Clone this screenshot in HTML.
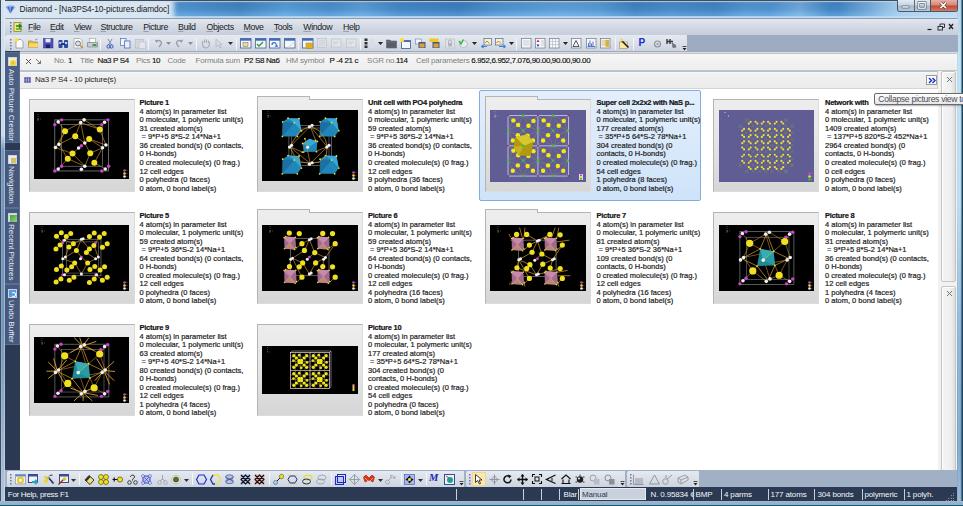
<!DOCTYPE html>
<html><head><meta charset="utf-8"><title>Diamond</title>
<style>
*{margin:0;padding:0;box-sizing:border-box}
html,body{width:963px;height:506px;overflow:hidden}
body{position:relative;background:#a8c4e2;font-family:"Liberation Sans",sans-serif;color:#1e1e1e}
.a{position:absolute}
#frameL{position:absolute;left:0;top:0;width:5px;height:506px;background:linear-gradient(90deg,#3f4d5e 0,#3f4d5e 1px,rgba(255,255,255,.25) 1px,rgba(255,255,255,0) 2px,rgba(255,255,255,0) 4px,rgba(255,255,255,.3) 4px),linear-gradient(180deg,#d4e2ee 0,#c8dbec 135px,#7497bf 150px,#7196be 330px,#9ab4d0 440px,#b0c6dc 506px)}
#frameR{position:absolute;left:957px;top:0;width:6px;height:506px;background:linear-gradient(90deg,rgba(255,255,255,0) 0,rgba(255,255,255,.25) 2px,rgba(255,255,255,0) 4px,#1f4358 5px),linear-gradient(180deg,#a8cce8 0,#b4dcf2 60px,#b0d8f0 200px,#7eaad0 330px,#6c9ac2 450px,#88acd0 506px)}
#frameB{position:absolute;left:0;top:501px;width:963px;height:5px;background:linear-gradient(180deg,#a6b6ca 0,#96b2cc 2px,#88b6d2 3.5px,#1a5870 4px)}
#title{position:absolute;left:0;top:0;width:963px;height:18px;overflow:hidden;background:linear-gradient(180deg,#3e4c5c 0,#3e4c5c 1px,#a8c4dc 1px,#a8c4dc 2px,#5a90c4 2px,#3f7fbc 4px,#4a8cc8 10px,#62a6e0 13px,#70b4ea 16px,#a0cbee 16px,#c8dcef 18px)}
#title .streak{position:absolute;top:2px;height:14px;background:linear-gradient(90deg,#6aaee6 0,#5a9ad4 180px,#3a78b2 240px,#6aaee0 285px,#5090cc 330px,#72aee0 362px,#3f80bf 400px,#3070b0 460px,#5a9ad4 500px,#7ab6e6 560px,#6aa8dc 600px,#3a78b4 635px,#4a8ac8 670px,#3a7ab8 715px,#60a0d8 745px,#5a9ad4 770px,#9cc8ec 800px,#3f80bc 830px,#4a8ac6 870px,#a8cce8 930px,#b8d6ee 963px);left:0;width:963px;opacity:.45}
#title .glow{position:absolute;left:-4px;top:-2px;width:178px;height:24px;background:#dce8f3;filter:blur(2.5px);opacity:.97}
#title .topb{position:absolute;left:0;top:0;width:963px;height:1px;background:#3e4c5c}
#title .t{position:absolute;left:19.5px;top:3.8px;font-size:8.3px;letter-spacing:-0.1px;color:#1a1a1a;white-space:nowrap}
#menu{position:absolute;left:5px;top:18px;width:953px;height:17px;border-radius:2px 2px 0 0;background:linear-gradient(180deg,#8d9cb2 0,#8d9cb2 1px,#e2e7ef 1px,#d4dbe6 8px,#c6cedb 17px)}
#menu span{position:absolute;top:3.6px;font-size:8.8px;letter-spacing:-0.4px;color:#1a1a1a;white-space:nowrap}
#menu u{text-decoration:underline;text-decoration-color:#9aa0aa;text-decoration-thickness:0.6px;text-underline-offset:1.2px}
#tbrow{position:absolute;left:5px;top:35px;width:953px;height:16.5px;background:#9eacc2}
.tb{position:absolute;background:linear-gradient(180deg,#e6eaf1,#cdd4df);border-radius:2px}
.grip{position:absolute;width:2px;height:10px;background:repeating-linear-gradient(180deg,#5a6a80 0,#5a6a80 1px,transparent 1px,transparent 2.5px)}
.sep{position:absolute;width:1px;height:12px;background:#9aa6b8;border-right:1px solid #f4f6f9}
#side{position:absolute;left:5px;top:51px;width:15px;height:419px;background:#2b3a52}
#info{position:absolute;left:20px;top:51.6px;width:937px;height:19.9px;background:linear-gradient(180deg,#d8dce2 0,#d8dce2 1px,#c4c4c4 1px,#c4c4c4 2px,#f6f6f6 2px,#eeeeee 100%);border-bottom:1px solid #c4c4c4}
#info span{position:absolute;top:4.2px;font-size:8px;white-space:nowrap}
#info .l{color:#7e7e7e;letter-spacing:-0.2px}
#info .v{color:#111;letter-spacing:-0.35px;-webkit-text-stroke:0.15px #111}
#hdr{position:absolute;left:20px;top:71.5px;width:918px;height:17px;background:linear-gradient(180deg,#fafafa 0,#f0f0f0 2px,#ececec 100%);border-bottom:1px solid #d4d4d4;border-right:1px solid #cfcfcf}
#hdr .t{position:absolute;left:15px;top:3px;font-size:8px;letter-spacing:-0.2px;color:#1e1e1e;white-space:nowrap}
#rpanel{position:absolute;left:938px;top:71px;width:19px;height:399px;background:#f2f2f2}
.rbox{position:absolute;left:3px;width:15px;background:linear-gradient(90deg,#f4f4f4 0,#efefef 9px,#d8d8d8 14px);border:1px solid #c4c4c4;border-radius:2px;box-shadow:inset 1px 1px 0 #fff}
#content{position:absolute;left:20px;top:89px;width:918px;height:381px;background:#fff}
#btrow{position:absolute;left:5px;top:470px;width:952px;height:17px;background:#a2b0c5}
#status{position:absolute;left:5px;top:487px;width:952px;height:14px;background:#2b3a52}
#status span{position:absolute;top:3.2px;font-size:8px;letter-spacing:-0.15px;color:#f2f5f8;white-space:nowrap}
#status .d{position:absolute;top:2px;width:1px;height:11px;background:#c8d0da}
.fr{position:absolute;width:106px;height:92.3px;border:1px solid #b4b4b4;border-right-color:#dcdcdc;border-bottom-color:#dcdcdc;background:linear-gradient(180deg,#ededed 0,#e6e6e6 40%,#d6d6d6 100%)}
.tabbed{border-top-color:#b4b4b4}
.tab{position:absolute;left:-1px;top:-4px;width:53px;height:4px;border:1px solid #b4b4b4;border-bottom:none;background:#ededed}
.sel{position:absolute;background:linear-gradient(180deg,#e3effc,#cfe3f9);border:1px solid #84acdd;border-radius:2px}
.ct{position:absolute;font-size:7.5px;line-height:8.52px;color:#1c1c1c;white-space:nowrap;-webkit-text-stroke:0.2px #1c1c1c}
.ct b{color:#111;letter-spacing:-0.25px}
#tip{position:absolute;left:874px;top:92.5px;width:95px;height:12.5px;background:linear-gradient(180deg,#ffffff,#e4e6ec);border:1px solid #6a6a6a;border-radius:2px;box-shadow:1px 1px 1.5px rgba(0,0,0,.3)}
#tip span{position:absolute;left:3.3px;top:0.6px;font-size:8.6px;letter-spacing:-0.3px;color:#4e4e4e;white-space:nowrap}
.stab{position:absolute;left:0;width:14.5px;background:#46597c;border:1px solid #5a6e92;border-left:none}
.stab span{position:absolute;left:2px;writing-mode:vertical-rl;font-size:8px;color:#e4eaf2;white-space:nowrap}
.sicon{position:absolute;left:2.5px;top:4px;width:9px;height:9px;border:1px solid #c8d4e4}

</style></head><body>
<div id="title"><div class="streak"></div><div class="glow"></div><div style="position:absolute;left:840px;top:1px;width:123px;height:17px;background:linear-gradient(90deg,rgba(190,222,245,0) 0,rgba(190,222,245,.75) 60px,rgba(200,228,248,.85) 123px)"></div><div class="topb"></div><span class="t">Diamond - [Na3PS4-10-pictures.diamdoc]</span></div>
<div id="frameL"></div>
<div id="frameR"></div>
<div id="frameB"></div>
<div id="menu">
<span style="left:23px"><u>F</u>ile</span>
<span style="left:45px"><u>E</u>dit</span>
<span style="left:69px"><u>V</u>iew</span>
<span style="left:95.5px"><u>S</u>tructure</span>
<span style="left:138.3px"><u>P</u>icture</span>
<span style="left:173px"><u>B</u>uild</span>
<span style="left:201.6px"><u>O</u>bjects</span>
<span style="left:238.6px"><u>M</u>ove</span>
<span style="left:268.7px"><u>T</u>ools</span>
<span style="left:298.3px"><u>W</u>indow</span>
<span style="left:338px"><u>H</u>elp</span>
</div>
<div id="tbrow"><div class="tb" style="left:0;top:0;width:682px;height:16px"></div></div>
<div id="side">
<div class="stab" style="top:1px;height:90.5px;background:#4b5f84"><div class="sicon" style="background:#f4f0c8"><div style="position:absolute;left:1.5px;top:1.5px;width:6px;height:6px;border-radius:50%;background:#e8c020;box-shadow:inset 0 0 0 1.5px #f0d860"></div></div><span style="top:16px">Auto Picture Creator</span></div>
<div class="stab" style="top:99px;height:58px"><div class="sicon" style="background:#e8ecf0"><div style="position:absolute;left:2px;top:2px;width:5px;height:5px;background:#d8c060"></div></div><span style="top:15px">Navigation</span></div>
<div class="stab" style="top:157px;height:76px"><div class="sicon" style="background:#d8e4d0"><div style="position:absolute;left:1px;top:1px;width:7px;height:7px;background:linear-gradient(135deg,#40a040,#a0d080)"></div></div><span style="top:15px">Recent Pictures</span></div>
<div class="stab" style="top:233px;height:61px"><div class="sicon" style="background:#5a9ae0"><div style="position:absolute;left:2px;top:2px;width:5px;height:5px;border:1.3px solid #fff;border-radius:50%;border-left-color:transparent"></div></div><span style="top:15px">Undo Buffer</span></div>
</div>
<div id="info">
<span class="l" style="left:34px">No.</span><span class="v" style="left:48px">1</span>
<span class="l" style="left:60px">Title</span><span class="v" style="left:77.5px">Na3 P S4</span>
<span class="l" style="left:116px">Pics</span><span class="v" style="left:132px">10</span>
<span class="l" style="left:147.5px">Code</span>
<span class="l" style="left:175.5px">Formula sum</span><span class="v" style="left:224px">P2 S8 Na6</span>
<span class="l" style="left:266px">HM symbol</span><span class="v" style="left:309.5px">P -4 21 c</span>
<span class="l" style="left:347px">SGR no.</span><span class="v" style="left:376px">114</span>
<span class="l" style="left:396px">Cell parameters</span><span class="v" style="left:451.3px">6.952,6.952,7.076,90.00,90.00,90.00</span>
</div>
<div id="hdr"><span class="t">Na3 P S4 - 10 picture(s)</span></div>
<div id="rpanel"><div class="rbox" style="top:0;height:211px"></div><div class="rbox" style="top:214.5px;height:185px"></div></div>
<div id="content"></div>
<div class="fr" style="left:29px;top:99px;height:93px"></div>
<svg class="a" style="left:34px;top:112px" width="95" height="67" viewBox="0 0 95 67"><rect width="95" height="67" fill="#000"/><line x1="4" y1="2" x2="4" y2="10" stroke="#a0a0a0" stroke-width="0.4" stroke-dasharray="1 1"/><line x1="4" y1="7" x2="8" y2="7" stroke="#a0a0a0" stroke-width="0.4" stroke-dasharray="1 1"/><circle cx="4" cy="7" r="0.6" fill="#a0a0a0"/><rect x="20.81" y="7.86" width="53.83" height="51.11" fill="none" stroke="#909090" stroke-width="0.7"/><rect x="27.62" y="12.63" width="40.89" height="41.57" fill="none" stroke="#909090" stroke-width="0.6"/><line x1="31.03" y1="19.17" x2="46.7" y2="10.59" stroke="#c08a2a" stroke-width="0.7"/><line x1="46.7" y1="10.59" x2="41.25" y2="24.21" stroke="#c08a2a" stroke-width="0.7"/><line x1="46.7" y1="10.59" x2="50.79" y2="31.03" stroke="#c08a2a" stroke-width="0.7"/><line x1="50.11" y1="7.86" x2="65.78" y2="17.4" stroke="#c08a2a" stroke-width="0.7"/><line x1="65.78" y1="17.4" x2="71.92" y2="33.07" stroke="#c08a2a" stroke-width="0.7"/><line x1="31.03" y1="19.17" x2="24.9" y2="32.39" stroke="#c08a2a" stroke-width="0.7"/><line x1="24.9" y1="32.39" x2="41.25" y2="24.21" stroke="#c08a2a" stroke-width="0.7"/><line x1="41.25" y1="24.21" x2="50.79" y2="31.03" stroke="#c08a2a" stroke-width="0.7"/><line x1="55.15" y1="26.94" x2="71.92" y2="33.07" stroke="#c08a2a" stroke-width="0.7"/><line x1="24.9" y1="32.39" x2="33.76" y2="46.7" stroke="#c08a2a" stroke-width="0.7"/><line x1="21.49" y1="35.53" x2="38.53" y2="41.52" stroke="#c08a2a" stroke-width="0.7"/><line x1="38.53" y1="41.52" x2="50.79" y2="54.2" stroke="#c08a2a" stroke-width="0.7"/><line x1="33.76" y1="46.7" x2="24.21" y2="56.93" stroke="#c08a2a" stroke-width="0.7"/><line x1="56.24" y1="41.25" x2="68.51" y2="35.8" stroke="#c08a2a" stroke-width="0.7"/><line x1="56.24" y1="41.25" x2="50.79" y2="54.2" stroke="#c08a2a" stroke-width="0.7"/><line x1="60.33" y1="50.79" x2="71.24" y2="56.93" stroke="#c08a2a" stroke-width="0.7"/><line x1="68.51" y1="35.8" x2="60.33" y2="50.79" stroke="#c08a2a" stroke-width="0.7"/><line x1="44.66" y1="36.07" x2="38.53" y2="41.52" stroke="#c08a2a" stroke-width="0.7"/><line x1="50.79" y1="31.03" x2="56.24" y2="41.25" stroke="#c08a2a" stroke-width="0.7"/><line x1="50.79" y1="54.2" x2="33.76" y2="46.7" stroke="#c08a2a" stroke-width="0.7"/><line x1="55.15" y1="26.94" x2="68.51" y2="35.8" stroke="#c08a2a" stroke-width="0.7"/><line x1="24.21" y1="9.9" x2="31.03" y2="19.17" stroke="#c08a2a" stroke-width="0.7"/><line x1="31.03" y1="19.17" x2="21.49" y2="35.53" stroke="#c08a2a" stroke-width="0.7"/><line x1="55.15" y1="26.94" x2="50.79" y2="31.03" stroke="#c08a2a" stroke-width="0.7"/><line x1="46.7" y1="10.59" x2="65.78" y2="17.4" stroke="#c08a2a" stroke-width="0.7"/><circle cx="27.62" cy="7.86" r="1.7" fill="#d040d0"/><circle cx="20.81" cy="12.63" r="1.7" fill="#d040d0"/><circle cx="73.96" cy="7.86" r="1.7" fill="#d040d0"/><circle cx="67.83" cy="12.63" r="1.7" fill="#d040d0"/><circle cx="47.38" cy="33.76" r="1.7" fill="#d040d0"/><circle cx="20.81" cy="58.97" r="1.7" fill="#d040d0"/><circle cx="27.62" cy="54.2" r="1.7" fill="#d040d0"/><circle cx="67.83" cy="58.97" r="1.7" fill="#d040d0"/><circle cx="74.64" cy="54.2" r="1.7" fill="#d040d0"/><circle cx="24.21" cy="9.9" r="1.8" fill="#f0f0f0"/><circle cx="50.11" cy="7.86" r="1.8" fill="#f0f0f0"/><circle cx="46.7" cy="10.59" r="1.8" fill="#f0f0f0"/><circle cx="70.56" cy="10.18" r="1.8" fill="#f0f0f0"/><circle cx="21.49" cy="35.53" r="1.8" fill="#f0f0f0"/><circle cx="24.9" cy="32.39" r="1.8" fill="#f0f0f0"/><circle cx="44.66" cy="36.07" r="1.8" fill="#f0f0f0"/><circle cx="50.79" cy="31.03" r="1.8" fill="#f0f0f0"/><circle cx="68.51" cy="35.8" r="1.8" fill="#f0f0f0"/><circle cx="71.92" cy="33.07" r="1.8" fill="#f0f0f0"/><circle cx="24.21" cy="56.93" r="1.8" fill="#f0f0f0"/><circle cx="47.38" cy="57.33" r="1.8" fill="#f0f0f0"/><circle cx="50.79" cy="54.2" r="1.8" fill="#f0f0f0"/><circle cx="71.24" cy="56.93" r="1.8" fill="#f0f0f0"/><circle cx="31.03" cy="19.17" r="3.0" fill="#f0e020"/><circle cx="41.25" cy="24.21" r="3.0" fill="#f0e020"/><circle cx="55.15" cy="26.94" r="3.0" fill="#f0e020"/><circle cx="65.78" cy="17.4" r="3.0" fill="#f0e020"/><circle cx="38.53" cy="41.52" r="3.0" fill="#f0e020"/><circle cx="33.76" cy="46.7" r="3.0" fill="#f0e020"/><circle cx="56.24" cy="41.25" r="3.0" fill="#f0e020"/><circle cx="60.33" cy="50.79" r="3.0" fill="#f0e020"/><circle cx="90.5" cy="58.5" r="1.3" fill="#d040d0"/><line x1="92" y1="58.5" x2="93.5" y2="58.5" stroke="#888" stroke-width="0.4"/><circle cx="90.5" cy="61.5" r="1.3" fill="#f0e020"/><line x1="92" y1="61.5" x2="93.5" y2="61.5" stroke="#888" stroke-width="0.4"/><circle cx="90.5" cy="64.5" r="1.3" fill="#f0f0f0"/><line x1="92" y1="64.5" x2="93.5" y2="64.5" stroke="#888" stroke-width="0.4"/></svg>
<div class="ct" style="left:139.5px;top:99.4px"><b>Picture 1</b><br>4 atom(s) in parameter list<br>0 molecular, 1 polymeric unit(s)<br>31 created atom(s)<br>&nbsp;= 9*P+5 8*S-2 14*Na+1<br>36 created bond(s) (0 contacts,<br>0 H-bonds)<br>0 created molecule(s) (0 frag.)<br>12 cell edges<br>0 polyhedra (0 faces)<br>0 atom, 0 bond label(s)</div>
<div class="fr tabbed" style="left:257px;top:99px;height:93px"><div class="tab"></div></div>
<svg class="a" style="left:262px;top:110px" width="96" height="71" viewBox="0 0 96 71"><rect width="96" height="71" fill="#000"/><line x1="6" y1="1" x2="6" y2="9" stroke="#a0a0a0" stroke-width="0.4" stroke-dasharray="1 1"/><line x1="6" y1="6" x2="10" y2="6" stroke="#a0a0a0" stroke-width="0.4" stroke-dasharray="1 1"/><circle cx="6" cy="6" r="0.6" fill="#a0a0a0"/><rect x="26.93" y="15.36" width="42.72" height="40.05" fill="none" stroke="#909090" stroke-width="0.6"/><rect x="29.6" y="18.03" width="37.38" height="34.71" fill="none" stroke="#909090" stroke-width="0.5"/><polygon points="20.7,11.8 26.04,8.24 37.08,8.6 39.39,20.7 35.3,26.4 20.34,26.4" fill="#1f88b8" fill-opacity="1"/><polygon points="26.04,8.24 37.08,8.6 39.39,20.7 32.27,12.69" fill="#38a8d8" fill-opacity="1"/><polygon points="20.7,11.8 32.27,12.69 20.34,26.4" fill="#1a70a0" fill-opacity="1"/><line x1="20.7" y1="11.8" x2="35.3" y2="26.4" stroke="#4060d0" stroke-width="0.5"/><circle cx="20.7" cy="11.8" r="0.9" fill="#f0e020"/><circle cx="26.04" cy="8.24" r="0.9" fill="#f0e020"/><circle cx="37.08" cy="8.6" r="0.9" fill="#f0e020"/><circle cx="39.39" cy="20.7" r="0.9" fill="#f0e020"/><circle cx="35.3" cy="26.4" r="0.9" fill="#f0e020"/><circle cx="20.34" cy="26.4" r="0.9" fill="#f0e020"/><circle cx="32.27" cy="12.69" r="0.9" fill="#f0e020"/><polygon points="58.08,11.8 63.42,8.24 74.46,8.6 76.77,20.7 72.68,26.4 57.72,26.4" fill="#1f88b8" fill-opacity="1"/><polygon points="63.42,8.24 74.46,8.6 76.77,20.7 69.65,12.69" fill="#38a8d8" fill-opacity="1"/><polygon points="58.08,11.8 69.65,12.69 57.72,26.4" fill="#1a70a0" fill-opacity="1"/><line x1="58.08" y1="11.8" x2="72.68" y2="26.4" stroke="#4060d0" stroke-width="0.5"/><circle cx="58.08" cy="11.8" r="0.9" fill="#f0e020"/><circle cx="63.42" cy="8.24" r="0.9" fill="#f0e020"/><circle cx="74.46" cy="8.6" r="0.9" fill="#f0e020"/><circle cx="76.77" cy="20.7" r="0.9" fill="#f0e020"/><circle cx="72.68" cy="26.4" r="0.9" fill="#f0e020"/><circle cx="57.72" cy="26.4" r="0.9" fill="#f0e020"/><circle cx="69.65" cy="12.69" r="0.9" fill="#f0e020"/><polygon points="20.7,49.18 26.04,45.62 37.08,45.98 39.39,58.08 35.3,63.78 20.34,63.78" fill="#1f88b8" fill-opacity="1"/><polygon points="26.04,45.62 37.08,45.98 39.39,58.08 32.27,50.07" fill="#38a8d8" fill-opacity="1"/><polygon points="20.7,49.18 32.27,50.07 20.34,63.78" fill="#1a70a0" fill-opacity="1"/><line x1="20.7" y1="49.18" x2="35.3" y2="63.78" stroke="#4060d0" stroke-width="0.5"/><circle cx="20.7" cy="49.18" r="0.9" fill="#f0e020"/><circle cx="26.04" cy="45.62" r="0.9" fill="#f0e020"/><circle cx="37.08" cy="45.98" r="0.9" fill="#f0e020"/><circle cx="39.39" cy="58.08" r="0.9" fill="#f0e020"/><circle cx="35.3" cy="63.78" r="0.9" fill="#f0e020"/><circle cx="20.34" cy="63.78" r="0.9" fill="#f0e020"/><circle cx="32.27" cy="50.07" r="0.9" fill="#f0e020"/><polygon points="58.08,49.18 63.42,45.62 74.46,45.98 76.77,58.08 72.68,63.78 57.72,63.78" fill="#1f88b8" fill-opacity="1"/><polygon points="63.42,45.62 74.46,45.98 76.77,58.08 69.65,50.07" fill="#38a8d8" fill-opacity="1"/><polygon points="58.08,49.18 69.65,50.07 57.72,63.78" fill="#1a70a0" fill-opacity="1"/><line x1="58.08" y1="49.18" x2="72.68" y2="63.78" stroke="#4060d0" stroke-width="0.5"/><circle cx="58.08" cy="49.18" r="0.9" fill="#f0e020"/><circle cx="63.42" cy="45.62" r="0.9" fill="#f0e020"/><circle cx="74.46" cy="45.98" r="0.9" fill="#f0e020"/><circle cx="76.77" cy="58.08" r="0.9" fill="#f0e020"/><circle cx="72.68" cy="63.78" r="0.9" fill="#f0e020"/><circle cx="57.72" cy="63.78" r="0.9" fill="#f0e020"/><circle cx="69.65" cy="50.07" r="0.9" fill="#f0e020"/><polygon points="40.64,33.52 47.4,28.71 55.41,31.38 54.52,41.7 41.7,42.06" fill="#1f88b8" fill-opacity="1"/><polygon points="40.64,33.52 47.4,28.71 55.41,31.38 47.4,36.72" fill="#38a8d8" fill-opacity="1"/><line x1="48.29" y1="16.25" x2="38.5" y2="20.7" stroke="#c08a2a" stroke-width="0.8"/><line x1="38.5" y1="20.7" x2="31.38" y2="30.49" stroke="#c08a2a" stroke-width="0.8"/><line x1="31.38" y1="30.49" x2="27.82" y2="36.72" stroke="#c08a2a" stroke-width="0.8"/><line x1="27.82" y1="36.72" x2="32.27" y2="45.62" stroke="#c08a2a" stroke-width="0.8"/><line x1="32.27" y1="45.62" x2="39.39" y2="51.85" stroke="#c08a2a" stroke-width="0.8"/><line x1="39.39" y1="51.85" x2="48.29" y2="53.63" stroke="#c08a2a" stroke-width="0.8"/><line x1="48.29" y1="53.63" x2="57.19" y2="51.85" stroke="#c08a2a" stroke-width="0.8"/><line x1="57.19" y1="51.85" x2="64.31" y2="45.62" stroke="#c08a2a" stroke-width="0.8"/><line x1="64.31" y1="45.62" x2="65.2" y2="36.72" stroke="#c08a2a" stroke-width="0.8"/><line x1="65.2" y1="36.72" x2="63.42" y2="29.6" stroke="#c08a2a" stroke-width="0.8"/><line x1="63.42" y1="29.6" x2="57.19" y2="20.7" stroke="#c08a2a" stroke-width="0.8"/><line x1="57.19" y1="20.7" x2="48.29" y2="16.25" stroke="#c08a2a" stroke-width="0.8"/><line x1="48.29" y1="16.25" x2="27.82" y2="36.72" stroke="#c08a2a" stroke-width="0.7"/><line x1="27.82" y1="36.72" x2="48.29" y2="53.63" stroke="#c08a2a" stroke-width="0.7"/><line x1="48.29" y1="53.63" x2="65.2" y2="36.72" stroke="#c08a2a" stroke-width="0.7"/><line x1="65.2" y1="36.72" x2="48.29" y2="16.25" stroke="#c08a2a" stroke-width="0.7"/><line x1="48.29" y1="16.25" x2="53.63" y2="30.49" stroke="#c08a2a" stroke-width="0.7"/><line x1="27.82" y1="36.72" x2="40.28" y2="42.06" stroke="#c08a2a" stroke-width="0.7"/><line x1="65.2" y1="36.72" x2="54.52" y2="41.17" stroke="#c08a2a" stroke-width="0.7"/><line x1="48.29" y1="53.63" x2="42.95" y2="28.71" stroke="#c08a2a" stroke-width="0.7"/><circle cx="40.64" cy="33.52" r="0.9" fill="#f0e020"/><circle cx="55.41" cy="31.38" r="0.9" fill="#f0e020"/><circle cx="54.52" cy="41.7" r="0.9" fill="#f0e020"/><circle cx="41.7" cy="42.06" r="0.9" fill="#f0e020"/><circle cx="39.39" cy="20.7" r="0.9" fill="#f0e020"/><circle cx="53.63" cy="30.49" r="0.9" fill="#f0e020"/><circle cx="42.95" cy="28.71" r="0.9" fill="#f0e020"/><circle cx="40.28" cy="42.06" r="0.9" fill="#f0e020"/><circle cx="47.4" cy="16.78" r="1.6" fill="#f0f0f0"/><circle cx="50.07" cy="15.36" r="1.6" fill="#f0f0f0"/><circle cx="27.46" cy="37.08" r="1.6" fill="#f0f0f0"/><circle cx="29.6" cy="35.3" r="1.6" fill="#f0f0f0"/><circle cx="64.84" cy="37.08" r="1.6" fill="#f0f0f0"/><circle cx="66.98" cy="35.3" r="1.6" fill="#f0f0f0"/><circle cx="47.4" cy="54.16" r="1.6" fill="#f0f0f0"/><circle cx="50.07" cy="52.74" r="1.6" fill="#f0f0f0"/><circle cx="45.62" cy="37.25" r="1.6" fill="#f0f0f0"/><circle cx="91.5" cy="62.5" r="1.3" fill="#d040d0"/><line x1="93" y1="62.5" x2="94.5" y2="62.5" stroke="#888" stroke-width="0.4"/><circle cx="91.5" cy="65.5" r="1.3" fill="#f0e020"/><line x1="93" y1="65.5" x2="94.5" y2="65.5" stroke="#888" stroke-width="0.4"/><circle cx="91.5" cy="68.5" r="1.3" fill="#f0f0f0"/><line x1="93" y1="68.5" x2="94.5" y2="68.5" stroke="#888" stroke-width="0.4"/></svg>
<div class="ct" style="left:368px;top:99.4px"><b>Unit cell with PO4 polyhedra</b><br>4 atom(s) in parameter list<br>0 molecular, 1 polymeric unit(s)<br>59 created atom(s)<br>&nbsp;= 9*P+5 36*S-2 14*Na+1<br>36 created bond(s) (0 contacts,<br>0 H-bonds)<br>0 created molecule(s) (0 frag.)<br>12 cell edges<br>9 polyhedra (36 faces)<br>0 atom, 0 bond label(s)</div>
<div class="sel" style="left:479px;top:90px;width:222px;height:111px"></div>
<div class="fr tabbed" style="left:485px;top:99px;height:93px"><div class="tab"></div></div>
<svg class="a" style="left:490px;top:110px" width="96" height="72" viewBox="0 0 96 72"><rect width="96" height="72" fill="#5f5d93"/><line x1="5" y1="1" x2="5" y2="9" stroke="#d0d0e8" stroke-width="0.4" stroke-dasharray="1 1"/><line x1="5" y1="6" x2="9" y2="6" stroke="#d0d0e8" stroke-width="0.4" stroke-dasharray="1 1"/><circle cx="5" cy="6" r="0.6" fill="#d0d0e8"/><line x1="33.16" y1="5.57" x2="23.37" y2="10.38" stroke="#a88a68" stroke-width="0.4"/><line x1="33.16" y1="5.57" x2="28.18" y2="15.0" stroke="#a88a68" stroke-width="0.4"/><line x1="33.16" y1="5.57" x2="38.5" y2="15.72" stroke="#a88a68" stroke-width="0.4"/><line x1="33.16" y1="5.57" x2="43.48" y2="10.91" stroke="#a88a68" stroke-width="0.4"/><line x1="63.06" y1="5.57" x2="53.63" y2="10.38" stroke="#a88a68" stroke-width="0.4"/><line x1="63.06" y1="5.57" x2="58.44" y2="15.0" stroke="#a88a68" stroke-width="0.4"/><line x1="63.06" y1="5.57" x2="68.76" y2="15.72" stroke="#a88a68" stroke-width="0.4"/><line x1="63.06" y1="5.57" x2="73.74" y2="10.91" stroke="#a88a68" stroke-width="0.4"/><line x1="18.03" y1="20.7" x2="23.37" y2="10.38" stroke="#a88a68" stroke-width="0.4"/><line x1="18.03" y1="20.7" x2="28.18" y2="15.0" stroke="#a88a68" stroke-width="0.4"/><line x1="18.03" y1="20.7" x2="22.84" y2="30.49" stroke="#a88a68" stroke-width="0.4"/><line x1="18.03" y1="20.7" x2="27.82" y2="25.15" stroke="#a88a68" stroke-width="0.4"/><line x1="33.16" y1="20.7" x2="23.37" y2="10.38" stroke="#a88a68" stroke-width="0.4"/><line x1="33.16" y1="20.7" x2="28.18" y2="15.0" stroke="#a88a68" stroke-width="0.4"/><line x1="33.16" y1="20.7" x2="38.5" y2="15.72" stroke="#a88a68" stroke-width="0.4"/><line x1="33.16" y1="20.7" x2="43.48" y2="10.91" stroke="#a88a68" stroke-width="0.4"/><line x1="33.16" y1="20.7" x2="22.84" y2="30.49" stroke="#a88a68" stroke-width="0.4"/><line x1="33.16" y1="20.7" x2="27.82" y2="25.15" stroke="#a88a68" stroke-width="0.4"/><line x1="33.16" y1="20.7" x2="37.61" y2="25.68" stroke="#a88a68" stroke-width="0.4"/><line x1="33.16" y1="20.7" x2="42.95" y2="30.49" stroke="#a88a68" stroke-width="0.4"/><line x1="47.93" y1="20.7" x2="38.5" y2="15.72" stroke="#a88a68" stroke-width="0.4"/><line x1="47.93" y1="20.7" x2="43.48" y2="10.91" stroke="#a88a68" stroke-width="0.4"/><line x1="47.93" y1="20.7" x2="37.61" y2="25.68" stroke="#a88a68" stroke-width="0.4"/><line x1="47.93" y1="20.7" x2="42.95" y2="30.49" stroke="#a88a68" stroke-width="0.4"/><line x1="47.93" y1="20.7" x2="53.63" y2="10.38" stroke="#a88a68" stroke-width="0.4"/><line x1="47.93" y1="20.7" x2="58.44" y2="15.0" stroke="#a88a68" stroke-width="0.4"/><line x1="47.93" y1="20.7" x2="53.1" y2="30.49" stroke="#a88a68" stroke-width="0.4"/><line x1="47.93" y1="20.7" x2="58.08" y2="25.15" stroke="#a88a68" stroke-width="0.4"/><line x1="63.06" y1="20.7" x2="53.63" y2="10.38" stroke="#a88a68" stroke-width="0.4"/><line x1="63.06" y1="20.7" x2="58.44" y2="15.0" stroke="#a88a68" stroke-width="0.4"/><line x1="63.06" y1="20.7" x2="68.76" y2="15.72" stroke="#a88a68" stroke-width="0.4"/><line x1="63.06" y1="20.7" x2="53.1" y2="30.49" stroke="#a88a68" stroke-width="0.4"/><line x1="63.06" y1="20.7" x2="58.08" y2="25.15" stroke="#a88a68" stroke-width="0.4"/><line x1="63.06" y1="20.7" x2="67.87" y2="25.68" stroke="#a88a68" stroke-width="0.4"/><line x1="63.06" y1="20.7" x2="73.21" y2="30.49" stroke="#a88a68" stroke-width="0.4"/><line x1="77.66" y1="20.7" x2="68.76" y2="15.72" stroke="#a88a68" stroke-width="0.4"/><line x1="77.66" y1="20.7" x2="73.74" y2="10.91" stroke="#a88a68" stroke-width="0.4"/><line x1="77.66" y1="20.7" x2="67.87" y2="25.68" stroke="#a88a68" stroke-width="0.4"/><line x1="77.66" y1="20.7" x2="73.21" y2="30.49" stroke="#a88a68" stroke-width="0.4"/><line x1="33.16" y1="35.83" x2="22.84" y2="30.49" stroke="#a88a68" stroke-width="0.4"/><line x1="33.16" y1="35.83" x2="27.82" y2="25.15" stroke="#a88a68" stroke-width="0.4"/><line x1="33.16" y1="35.83" x2="37.61" y2="25.68" stroke="#a88a68" stroke-width="0.4"/><line x1="33.16" y1="35.83" x2="42.95" y2="30.49" stroke="#a88a68" stroke-width="0.4"/><line x1="33.16" y1="35.83" x2="23.37" y2="40.64" stroke="#a88a68" stroke-width="0.4"/><line x1="33.16" y1="35.83" x2="28.18" y2="45.26" stroke="#a88a68" stroke-width="0.4"/><line x1="33.16" y1="35.83" x2="38.5" y2="45.98" stroke="#a88a68" stroke-width="0.4"/><line x1="33.16" y1="35.83" x2="43.48" y2="41.17" stroke="#a88a68" stroke-width="0.4"/><line x1="63.06" y1="35.83" x2="53.1" y2="30.49" stroke="#a88a68" stroke-width="0.4"/><line x1="63.06" y1="35.83" x2="58.08" y2="25.15" stroke="#a88a68" stroke-width="0.4"/><line x1="63.06" y1="35.83" x2="67.87" y2="25.68" stroke="#a88a68" stroke-width="0.4"/><line x1="63.06" y1="35.83" x2="73.21" y2="30.49" stroke="#a88a68" stroke-width="0.4"/><line x1="63.06" y1="35.83" x2="53.63" y2="40.64" stroke="#a88a68" stroke-width="0.4"/><line x1="63.06" y1="35.83" x2="58.44" y2="45.26" stroke="#a88a68" stroke-width="0.4"/><line x1="63.06" y1="35.83" x2="68.76" y2="45.98" stroke="#a88a68" stroke-width="0.4"/><line x1="63.06" y1="35.83" x2="73.74" y2="41.17" stroke="#a88a68" stroke-width="0.4"/><line x1="18.03" y1="50.6" x2="23.37" y2="40.64" stroke="#a88a68" stroke-width="0.4"/><line x1="18.03" y1="50.6" x2="28.18" y2="45.26" stroke="#a88a68" stroke-width="0.4"/><line x1="18.03" y1="50.6" x2="22.84" y2="60.75" stroke="#a88a68" stroke-width="0.4"/><line x1="18.03" y1="50.6" x2="27.82" y2="55.41" stroke="#a88a68" stroke-width="0.4"/><line x1="33.16" y1="50.6" x2="23.37" y2="40.64" stroke="#a88a68" stroke-width="0.4"/><line x1="33.16" y1="50.6" x2="28.18" y2="45.26" stroke="#a88a68" stroke-width="0.4"/><line x1="33.16" y1="50.6" x2="38.5" y2="45.98" stroke="#a88a68" stroke-width="0.4"/><line x1="33.16" y1="50.6" x2="43.48" y2="41.17" stroke="#a88a68" stroke-width="0.4"/><line x1="33.16" y1="50.6" x2="27.82" y2="55.41" stroke="#a88a68" stroke-width="0.4"/><line x1="33.16" y1="50.6" x2="37.61" y2="55.94" stroke="#a88a68" stroke-width="0.4"/><line x1="33.16" y1="50.6" x2="42.95" y2="60.75" stroke="#a88a68" stroke-width="0.4"/><line x1="47.93" y1="50.6" x2="38.5" y2="45.98" stroke="#a88a68" stroke-width="0.4"/><line x1="47.93" y1="50.6" x2="43.48" y2="41.17" stroke="#a88a68" stroke-width="0.4"/><line x1="47.93" y1="50.6" x2="37.61" y2="55.94" stroke="#a88a68" stroke-width="0.4"/><line x1="47.93" y1="50.6" x2="42.95" y2="60.75" stroke="#a88a68" stroke-width="0.4"/><line x1="47.93" y1="50.6" x2="53.63" y2="40.64" stroke="#a88a68" stroke-width="0.4"/><line x1="47.93" y1="50.6" x2="58.44" y2="45.26" stroke="#a88a68" stroke-width="0.4"/><line x1="47.93" y1="50.6" x2="53.1" y2="60.75" stroke="#a88a68" stroke-width="0.4"/><line x1="47.93" y1="50.6" x2="58.08" y2="55.41" stroke="#a88a68" stroke-width="0.4"/><line x1="63.06" y1="50.6" x2="53.63" y2="40.64" stroke="#a88a68" stroke-width="0.4"/><line x1="63.06" y1="50.6" x2="58.44" y2="45.26" stroke="#a88a68" stroke-width="0.4"/><line x1="63.06" y1="50.6" x2="68.76" y2="45.98" stroke="#a88a68" stroke-width="0.4"/><line x1="63.06" y1="50.6" x2="53.1" y2="60.75" stroke="#a88a68" stroke-width="0.4"/><line x1="63.06" y1="50.6" x2="58.08" y2="55.41" stroke="#a88a68" stroke-width="0.4"/><line x1="63.06" y1="50.6" x2="67.87" y2="55.94" stroke="#a88a68" stroke-width="0.4"/><line x1="77.66" y1="50.6" x2="68.76" y2="45.98" stroke="#a88a68" stroke-width="0.4"/><line x1="77.66" y1="50.6" x2="73.74" y2="41.17" stroke="#a88a68" stroke-width="0.4"/><line x1="77.66" y1="50.6" x2="67.87" y2="55.94" stroke="#a88a68" stroke-width="0.4"/><line x1="77.66" y1="50.6" x2="73.21" y2="60.75" stroke="#a88a68" stroke-width="0.4"/><line x1="33.16" y1="66.09" x2="22.84" y2="60.75" stroke="#a88a68" stroke-width="0.4"/><line x1="33.16" y1="66.09" x2="27.82" y2="55.41" stroke="#a88a68" stroke-width="0.4"/><line x1="33.16" y1="66.09" x2="37.61" y2="55.94" stroke="#a88a68" stroke-width="0.4"/><line x1="33.16" y1="66.09" x2="42.95" y2="60.75" stroke="#a88a68" stroke-width="0.4"/><line x1="63.06" y1="66.09" x2="53.1" y2="60.75" stroke="#a88a68" stroke-width="0.4"/><line x1="63.06" y1="66.09" x2="58.08" y2="55.41" stroke="#a88a68" stroke-width="0.4"/><line x1="63.06" y1="66.09" x2="67.87" y2="55.94" stroke="#a88a68" stroke-width="0.4"/><line x1="63.06" y1="66.09" x2="73.21" y2="60.75" stroke="#a88a68" stroke-width="0.4"/><line x1="18.03" y1="5.57" x2="23.37" y2="10.38" stroke="#a88a68" stroke-width="0.4"/><line x1="18.03" y1="5.57" x2="28.18" y2="15.0" stroke="#a88a68" stroke-width="0.4"/><line x1="47.93" y1="5.57" x2="38.5" y2="15.72" stroke="#a88a68" stroke-width="0.4"/><line x1="47.93" y1="5.57" x2="43.48" y2="10.91" stroke="#a88a68" stroke-width="0.4"/><line x1="47.93" y1="5.57" x2="53.63" y2="10.38" stroke="#a88a68" stroke-width="0.4"/><line x1="47.93" y1="5.57" x2="58.44" y2="15.0" stroke="#a88a68" stroke-width="0.4"/><line x1="78.55" y1="5.57" x2="68.76" y2="15.72" stroke="#a88a68" stroke-width="0.4"/><line x1="78.55" y1="5.57" x2="73.74" y2="10.91" stroke="#a88a68" stroke-width="0.4"/><line x1="18.03" y1="35.83" x2="22.84" y2="30.49" stroke="#a88a68" stroke-width="0.4"/><line x1="18.03" y1="35.83" x2="23.37" y2="40.64" stroke="#a88a68" stroke-width="0.4"/><line x1="18.03" y1="35.83" x2="28.18" y2="45.26" stroke="#a88a68" stroke-width="0.4"/><line x1="47.93" y1="35.83" x2="42.95" y2="30.49" stroke="#a88a68" stroke-width="0.4"/><line x1="47.93" y1="35.83" x2="53.1" y2="30.49" stroke="#a88a68" stroke-width="0.4"/><line x1="47.93" y1="35.83" x2="38.5" y2="45.98" stroke="#a88a68" stroke-width="0.4"/><line x1="47.93" y1="35.83" x2="43.48" y2="41.17" stroke="#a88a68" stroke-width="0.4"/><line x1="47.93" y1="35.83" x2="53.63" y2="40.64" stroke="#a88a68" stroke-width="0.4"/><line x1="47.93" y1="35.83" x2="58.44" y2="45.26" stroke="#a88a68" stroke-width="0.4"/><line x1="78.55" y1="35.83" x2="73.21" y2="30.49" stroke="#a88a68" stroke-width="0.4"/><line x1="78.55" y1="35.83" x2="68.76" y2="45.98" stroke="#a88a68" stroke-width="0.4"/><line x1="78.55" y1="35.83" x2="73.74" y2="41.17" stroke="#a88a68" stroke-width="0.4"/><line x1="18.03" y1="66.09" x2="22.84" y2="60.75" stroke="#a88a68" stroke-width="0.4"/><line x1="47.93" y1="66.09" x2="42.95" y2="60.75" stroke="#a88a68" stroke-width="0.4"/><line x1="47.93" y1="66.09" x2="53.1" y2="60.75" stroke="#a88a68" stroke-width="0.4"/><line x1="78.55" y1="66.09" x2="73.21" y2="60.75" stroke="#a88a68" stroke-width="0.4"/><line x1="18.03" y1="5.57" x2="18.03" y2="66.09" stroke="#c4c4ee" stroke-width="0.9"/><line x1="47.93" y1="5.57" x2="47.93" y2="66.09" stroke="#c4c4ee" stroke-width="0.9"/><line x1="78.55" y1="5.57" x2="78.55" y2="66.09" stroke="#c4c4ee" stroke-width="0.9"/><line x1="18.03" y1="5.57" x2="78.55" y2="5.57" stroke="#c4c4ee" stroke-width="0.9"/><line x1="18.03" y1="35.83" x2="78.55" y2="35.83" stroke="#c4c4ee" stroke-width="0.9"/><line x1="18.03" y1="66.09" x2="78.55" y2="66.09" stroke="#c4c4ee" stroke-width="0.9"/><circle cx="23.37" cy="10.38" r="2.2" fill="#f2ec10"/><circle cx="28.18" cy="15.0" r="2.2" fill="#f2ec10"/><circle cx="38.5" cy="15.72" r="2.2" fill="#f2ec10"/><circle cx="43.48" cy="10.91" r="2.2" fill="#f2ec10"/><circle cx="22.84" cy="30.49" r="2.2" fill="#f2ec10"/><circle cx="27.82" cy="25.15" r="2.2" fill="#f2ec10"/><circle cx="37.61" cy="25.68" r="2.2" fill="#f2ec10"/><circle cx="42.95" cy="30.49" r="2.2" fill="#f2ec10"/><circle cx="53.63" cy="10.38" r="2.2" fill="#f2ec10"/><circle cx="58.44" cy="15.0" r="2.2" fill="#f2ec10"/><circle cx="68.76" cy="15.72" r="2.2" fill="#f2ec10"/><circle cx="73.74" cy="10.91" r="2.2" fill="#f2ec10"/><circle cx="53.1" cy="30.49" r="2.2" fill="#f2ec10"/><circle cx="58.08" cy="25.15" r="2.2" fill="#f2ec10"/><circle cx="67.87" cy="25.68" r="2.2" fill="#f2ec10"/><circle cx="73.21" cy="30.49" r="2.2" fill="#f2ec10"/><circle cx="23.37" cy="40.64" r="2.2" fill="#f2ec10"/><circle cx="28.18" cy="45.26" r="2.2" fill="#f2ec10"/><circle cx="38.5" cy="45.98" r="2.2" fill="#f2ec10"/><circle cx="43.48" cy="41.17" r="2.2" fill="#f2ec10"/><circle cx="22.84" cy="60.75" r="2.2" fill="#f2ec10"/><circle cx="27.82" cy="55.41" r="2.2" fill="#f2ec10"/><circle cx="37.61" cy="55.94" r="2.2" fill="#f2ec10"/><circle cx="42.95" cy="60.75" r="2.2" fill="#f2ec10"/><circle cx="53.63" cy="40.64" r="2.2" fill="#f2ec10"/><circle cx="58.44" cy="45.26" r="2.2" fill="#f2ec10"/><circle cx="68.76" cy="45.98" r="2.2" fill="#f2ec10"/><circle cx="73.74" cy="41.17" r="2.2" fill="#f2ec10"/><circle cx="53.1" cy="60.75" r="2.2" fill="#f2ec10"/><circle cx="58.08" cy="55.41" r="2.2" fill="#f2ec10"/><circle cx="67.87" cy="55.94" r="2.2" fill="#f2ec10"/><circle cx="73.21" cy="60.75" r="2.2" fill="#f2ec10"/><polygon points="25.68,26.93 36.72,24.62 43.48,31.74 40.64,45.98 28.71,45.62 23.37,36.72" fill="#b09a10" fill-opacity="1"/><polygon points="25.68,26.93 36.72,24.62 43.48,31.74 34.05,35.83" fill="#d8c830" fill-opacity="1"/><polygon points="23.37,36.72 34.05,35.83 28.71,45.62" fill="#c8b020" fill-opacity="1"/><circle cx="33.16" cy="5.57" r="1.3" fill="#28c838"/><circle cx="63.06" cy="5.57" r="1.3" fill="#28c838"/><circle cx="18.03" cy="20.7" r="1.3" fill="#28c838"/><circle cx="33.16" cy="20.7" r="1.3" fill="#28c838"/><circle cx="47.93" cy="20.7" r="1.3" fill="#28c838"/><circle cx="63.06" cy="20.7" r="1.3" fill="#28c838"/><circle cx="77.66" cy="20.7" r="1.3" fill="#28c838"/><circle cx="33.16" cy="35.83" r="1.3" fill="#28c838"/><circle cx="63.06" cy="35.83" r="1.3" fill="#28c838"/><circle cx="18.03" cy="50.6" r="1.3" fill="#28c838"/><circle cx="33.16" cy="50.6" r="1.3" fill="#28c838"/><circle cx="47.93" cy="50.6" r="1.3" fill="#28c838"/><circle cx="63.06" cy="50.6" r="1.3" fill="#28c838"/><circle cx="77.66" cy="50.6" r="1.3" fill="#28c838"/><circle cx="33.16" cy="66.09" r="1.3" fill="#28c838"/><circle cx="63.06" cy="66.09" r="1.3" fill="#28c838"/><circle cx="18.03" cy="5.57" r="1.0" fill="#903070"/><circle cx="47.93" cy="5.57" r="1.0" fill="#903070"/><circle cx="78.55" cy="5.57" r="1.0" fill="#903070"/><circle cx="18.03" cy="35.83" r="1.0" fill="#903070"/><circle cx="47.93" cy="35.83" r="1.0" fill="#903070"/><circle cx="78.55" cy="35.83" r="1.0" fill="#903070"/><circle cx="18.03" cy="66.09" r="1.0" fill="#903070"/><circle cx="47.93" cy="66.09" r="1.0" fill="#903070"/><circle cx="78.55" cy="66.09" r="1.0" fill="#903070"/><rect x="89" y="64" width="4" height="6" fill="#e0d8f0"/><rect x="90" y="64.5" width="2" height="1.6" fill="#d040d0"/><rect x="90" y="66.3" width="2" height="1.6" fill="#f0e020"/><rect x="90" y="68" width="2" height="1.6" fill="#30c040"/></svg>
<div class="ct" style="left:596.5px;top:99.4px"><b>Super cell 2x2x2 with NaS p...</b><br>4 atom(s) in parameter list<br>0 molecular, 1 polymeric unit(s)<br>177 created atom(s)<br>&nbsp;= 35*P+5 64*S-2 78*Na+1<br>304 created bond(s) (0<br>contacts, 0 H-bonds)<br>0 created molecule(s) (0 frag.)<br>54 cell edges<br>1 polyhedra (8 faces)<br>0 atom, 0 bond label(s)</div>
<div class="fr" style="left:713px;top:99px;height:93px"></div>
<svg class="a" style="left:719px;top:110px" width="95" height="72" viewBox="0 0 95 72"><rect width="95" height="72" fill="#5f5d93"/><circle cx="6" cy="2.5" r="0.6" fill="#e0e0f0"/><circle cx="9.5" cy="6" r="0.6" fill="#e0e0f0"/><path d="M32.44 14.39L35.44 17.39M35.44 14.39L32.44 17.39" stroke="#7a8a60" stroke-width="0.5"/><path d="M39.2 14.39L42.2 17.39M42.2 14.39L39.2 17.39" stroke="#7a8a60" stroke-width="0.5"/><path d="M45.43 14.39L48.43 17.39M48.43 14.39L45.43 17.39" stroke="#7a8a60" stroke-width="0.5"/><path d="M51.66 14.39L54.66 17.39M54.66 14.39L51.66 17.39" stroke="#7a8a60" stroke-width="0.5"/><path d="M58.43 14.39L61.43 17.39M61.43 14.39L58.43 17.39" stroke="#7a8a60" stroke-width="0.5"/><path d="M65.01 14.39L68.01 17.39M68.01 14.39L65.01 17.39" stroke="#7a8a60" stroke-width="0.5"/><path d="M25.85 21.51L28.85 24.51M28.85 21.51L25.85 24.51" stroke="#7a8a60" stroke-width="0.5"/><path d="M32.44 21.51L35.44 24.51M35.44 21.51L32.44 24.51" stroke="#7a8a60" stroke-width="0.5"/><path d="M39.2 21.51L42.2 24.51M42.2 21.51L39.2 24.51" stroke="#7a8a60" stroke-width="0.5"/><path d="M45.43 21.51L48.43 24.51M48.43 21.51L45.43 24.51" stroke="#7a8a60" stroke-width="0.5"/><path d="M51.66 21.51L54.66 24.51M54.66 21.51L51.66 24.51" stroke="#7a8a60" stroke-width="0.5"/><path d="M58.43 21.51L61.43 24.51M61.43 21.51L58.43 24.51" stroke="#7a8a60" stroke-width="0.5"/><path d="M65.01 21.51L68.01 24.51M68.01 21.51L65.01 24.51" stroke="#7a8a60" stroke-width="0.5"/><path d="M71.6 21.51L74.6 24.51M74.6 21.51L71.6 24.51" stroke="#7a8a60" stroke-width="0.5"/><path d="M25.85 27.74L28.85 30.74M28.85 27.74L25.85 30.74" stroke="#7a8a60" stroke-width="0.5"/><path d="M32.44 27.74L35.44 30.74M35.44 27.74L32.44 30.74" stroke="#7a8a60" stroke-width="0.5"/><path d="M39.2 27.74L42.2 30.74M42.2 27.74L39.2 30.74" stroke="#7a8a60" stroke-width="0.5"/><path d="M45.43 27.74L48.43 30.74M48.43 27.74L45.43 30.74" stroke="#7a8a60" stroke-width="0.5"/><path d="M51.66 27.74L54.66 30.74M54.66 27.74L51.66 30.74" stroke="#7a8a60" stroke-width="0.5"/><path d="M58.43 27.74L61.43 30.74M61.43 27.74L58.43 30.74" stroke="#7a8a60" stroke-width="0.5"/><path d="M65.01 27.74L68.01 30.74M68.01 27.74L65.01 30.74" stroke="#7a8a60" stroke-width="0.5"/><path d="M71.6 27.74L74.6 30.74M74.6 27.74L71.6 30.74" stroke="#7a8a60" stroke-width="0.5"/><path d="M25.85 33.97L28.85 36.97M28.85 33.97L25.85 36.97" stroke="#7a8a60" stroke-width="0.5"/><path d="M32.44 33.97L35.44 36.97M35.44 33.97L32.44 36.97" stroke="#7a8a60" stroke-width="0.5"/><path d="M39.2 33.97L42.2 36.97M42.2 33.97L39.2 36.97" stroke="#7a8a60" stroke-width="0.5"/><path d="M45.43 33.97L48.43 36.97M48.43 33.97L45.43 36.97" stroke="#7a8a60" stroke-width="0.5"/><path d="M51.66 33.97L54.66 36.97M54.66 33.97L51.66 36.97" stroke="#7a8a60" stroke-width="0.5"/><path d="M58.43 33.97L61.43 36.97M61.43 33.97L58.43 36.97" stroke="#7a8a60" stroke-width="0.5"/><path d="M65.01 33.97L68.01 36.97M68.01 33.97L65.01 36.97" stroke="#7a8a60" stroke-width="0.5"/><path d="M71.6 33.97L74.6 36.97M74.6 33.97L71.6 36.97" stroke="#7a8a60" stroke-width="0.5"/><path d="M25.85 40.2L28.85 43.2M28.85 40.2L25.85 43.2" stroke="#7a8a60" stroke-width="0.5"/><path d="M32.44 40.2L35.44 43.2M35.44 40.2L32.44 43.2" stroke="#7a8a60" stroke-width="0.5"/><path d="M39.2 40.2L42.2 43.2M42.2 40.2L39.2 43.2" stroke="#7a8a60" stroke-width="0.5"/><path d="M45.43 40.2L48.43 43.2M48.43 40.2L45.43 43.2" stroke="#7a8a60" stroke-width="0.5"/><path d="M51.66 40.2L54.66 43.2M54.66 40.2L51.66 43.2" stroke="#7a8a60" stroke-width="0.5"/><path d="M58.43 40.2L61.43 43.2M61.43 40.2L58.43 43.2" stroke="#7a8a60" stroke-width="0.5"/><path d="M65.01 40.2L68.01 43.2M68.01 40.2L65.01 43.2" stroke="#7a8a60" stroke-width="0.5"/><path d="M71.6 40.2L74.6 43.2M74.6 40.2L71.6 43.2" stroke="#7a8a60" stroke-width="0.5"/><path d="M25.85 47.32L28.85 50.32M28.85 47.32L25.85 50.32" stroke="#7a8a60" stroke-width="0.5"/><path d="M32.44 47.32L35.44 50.32M35.44 47.32L32.44 50.32" stroke="#7a8a60" stroke-width="0.5"/><path d="M39.2 47.32L42.2 50.32M42.2 47.32L39.2 50.32" stroke="#7a8a60" stroke-width="0.5"/><path d="M45.43 47.32L48.43 50.32M48.43 47.32L45.43 50.32" stroke="#7a8a60" stroke-width="0.5"/><path d="M51.66 47.32L54.66 50.32M54.66 47.32L51.66 50.32" stroke="#7a8a60" stroke-width="0.5"/><path d="M58.43 47.32L61.43 50.32M61.43 47.32L58.43 50.32" stroke="#7a8a60" stroke-width="0.5"/><path d="M65.01 47.32L68.01 50.32M68.01 47.32L65.01 50.32" stroke="#7a8a60" stroke-width="0.5"/><path d="M71.6 47.32L74.6 50.32M74.6 47.32L71.6 50.32" stroke="#7a8a60" stroke-width="0.5"/><path d="M25.85 53.55L28.85 56.55M28.85 53.55L25.85 56.55" stroke="#7a8a60" stroke-width="0.5"/><path d="M32.44 53.55L35.44 56.55M35.44 53.55L32.44 56.55" stroke="#7a8a60" stroke-width="0.5"/><path d="M39.2 53.55L42.2 56.55M42.2 53.55L39.2 56.55" stroke="#7a8a60" stroke-width="0.5"/><path d="M45.43 53.55L48.43 56.55M48.43 53.55L45.43 56.55" stroke="#7a8a60" stroke-width="0.5"/><path d="M51.66 53.55L54.66 56.55M54.66 53.55L51.66 56.55" stroke="#7a8a60" stroke-width="0.5"/><path d="M58.43 53.55L61.43 56.55M61.43 53.55L58.43 56.55" stroke="#7a8a60" stroke-width="0.5"/><path d="M65.01 53.55L68.01 56.55M68.01 53.55L65.01 56.55" stroke="#7a8a60" stroke-width="0.5"/><path d="M71.6 53.55L74.6 56.55M74.6 53.55L71.6 56.55" stroke="#7a8a60" stroke-width="0.5"/><path d="M32.44 59.78L35.44 62.78M35.44 59.78L32.44 62.78" stroke="#7a8a60" stroke-width="0.5"/><path d="M39.2 59.78L42.2 62.78M42.2 59.78L39.2 62.78" stroke="#7a8a60" stroke-width="0.5"/><path d="M45.43 59.78L48.43 62.78M48.43 59.78L45.43 62.78" stroke="#7a8a60" stroke-width="0.5"/><path d="M51.66 59.78L54.66 62.78M54.66 59.78L51.66 62.78" stroke="#7a8a60" stroke-width="0.5"/><path d="M58.43 59.78L61.43 62.78M61.43 59.78L58.43 62.78" stroke="#7a8a60" stroke-width="0.5"/><path d="M65.01 59.78L68.01 62.78M68.01 59.78L65.01 62.78" stroke="#7a8a60" stroke-width="0.5"/><circle cx="29.85" cy="13.58" r="1.1" fill="#f0e030"/><circle cx="31.63" cy="11.8" r="1.1" fill="#f0e030"/><circle cx="36.61" cy="11.8" r="1.1" fill="#f0e030"/><circle cx="38.39" cy="13.58" r="1.1" fill="#f0e030"/><circle cx="42.84" cy="13.58" r="1.1" fill="#f0e030"/><circle cx="44.62" cy="11.8" r="1.1" fill="#f0e030"/><circle cx="49.07" cy="11.8" r="1.1" fill="#f0e030"/><circle cx="50.85" cy="13.58" r="1.1" fill="#f0e030"/><circle cx="55.83" cy="13.58" r="1.1" fill="#f0e030"/><circle cx="57.61" cy="11.8" r="1.1" fill="#f0e030"/><circle cx="62.42" cy="11.8" r="1.1" fill="#f0e030"/><circle cx="64.2" cy="13.58" r="1.1" fill="#f0e030"/><circle cx="23.26" cy="20.7" r="1.1" fill="#f0e030"/><circle cx="25.04" cy="18.92" r="1.1" fill="#f0e030"/><circle cx="29.85" cy="18.92" r="1.1" fill="#f0e030"/><circle cx="31.63" cy="20.7" r="1.1" fill="#f0e030"/><circle cx="36.61" cy="20.7" r="1.1" fill="#f0e030"/><circle cx="38.39" cy="18.92" r="1.1" fill="#f0e030"/><circle cx="42.84" cy="18.92" r="1.1" fill="#f0e030"/><circle cx="44.62" cy="20.7" r="1.1" fill="#f0e030"/><circle cx="49.07" cy="20.7" r="1.1" fill="#f0e030"/><circle cx="50.85" cy="18.92" r="1.1" fill="#f0e030"/><circle cx="55.83" cy="18.92" r="1.1" fill="#f0e030"/><circle cx="57.61" cy="20.7" r="1.1" fill="#f0e030"/><circle cx="62.42" cy="20.7" r="1.1" fill="#f0e030"/><circle cx="64.2" cy="18.92" r="1.1" fill="#f0e030"/><circle cx="69.01" cy="18.92" r="1.1" fill="#f0e030"/><circle cx="70.79" cy="20.7" r="1.1" fill="#f0e030"/><circle cx="23.26" cy="25.15" r="1.1" fill="#f0e030"/><circle cx="25.04" cy="26.93" r="1.1" fill="#f0e030"/><circle cx="29.85" cy="26.93" r="1.1" fill="#f0e030"/><circle cx="31.63" cy="25.15" r="1.1" fill="#f0e030"/><circle cx="36.61" cy="25.15" r="1.1" fill="#f0e030"/><circle cx="38.39" cy="26.93" r="1.1" fill="#f0e030"/><circle cx="42.84" cy="26.93" r="1.1" fill="#f0e030"/><circle cx="44.62" cy="25.15" r="1.1" fill="#f0e030"/><circle cx="49.07" cy="25.15" r="1.1" fill="#f0e030"/><circle cx="50.85" cy="26.93" r="1.1" fill="#f0e030"/><circle cx="55.83" cy="26.93" r="1.1" fill="#f0e030"/><circle cx="57.61" cy="25.15" r="1.1" fill="#f0e030"/><circle cx="62.42" cy="25.15" r="1.1" fill="#f0e030"/><circle cx="64.2" cy="26.93" r="1.1" fill="#f0e030"/><circle cx="69.01" cy="26.93" r="1.1" fill="#f0e030"/><circle cx="70.79" cy="25.15" r="1.1" fill="#f0e030"/><circle cx="23.26" cy="33.16" r="1.1" fill="#f0e030"/><circle cx="25.04" cy="31.38" r="1.1" fill="#f0e030"/><circle cx="29.85" cy="31.38" r="1.1" fill="#f0e030"/><circle cx="31.63" cy="33.16" r="1.1" fill="#f0e030"/><circle cx="36.61" cy="33.16" r="1.1" fill="#f0e030"/><circle cx="38.39" cy="31.38" r="1.1" fill="#f0e030"/><circle cx="42.84" cy="31.38" r="1.1" fill="#f0e030"/><circle cx="44.62" cy="33.16" r="1.1" fill="#f0e030"/><circle cx="49.07" cy="33.16" r="1.1" fill="#f0e030"/><circle cx="50.85" cy="31.38" r="1.1" fill="#f0e030"/><circle cx="55.83" cy="31.38" r="1.1" fill="#f0e030"/><circle cx="57.61" cy="33.16" r="1.1" fill="#f0e030"/><circle cx="62.42" cy="33.16" r="1.1" fill="#f0e030"/><circle cx="64.2" cy="31.38" r="1.1" fill="#f0e030"/><circle cx="69.01" cy="31.38" r="1.1" fill="#f0e030"/><circle cx="70.79" cy="33.16" r="1.1" fill="#f0e030"/><circle cx="23.26" cy="37.61" r="1.1" fill="#f0e030"/><circle cx="25.04" cy="39.39" r="1.1" fill="#f0e030"/><circle cx="29.85" cy="39.39" r="1.1" fill="#f0e030"/><circle cx="31.63" cy="37.61" r="1.1" fill="#f0e030"/><circle cx="36.61" cy="37.61" r="1.1" fill="#f0e030"/><circle cx="38.39" cy="39.39" r="1.1" fill="#f0e030"/><circle cx="42.84" cy="39.39" r="1.1" fill="#f0e030"/><circle cx="44.62" cy="37.61" r="1.1" fill="#f0e030"/><circle cx="49.07" cy="37.61" r="1.1" fill="#f0e030"/><circle cx="50.85" cy="39.39" r="1.1" fill="#f0e030"/><circle cx="55.83" cy="39.39" r="1.1" fill="#f0e030"/><circle cx="57.61" cy="37.61" r="1.1" fill="#f0e030"/><circle cx="62.42" cy="37.61" r="1.1" fill="#f0e030"/><circle cx="64.2" cy="39.39" r="1.1" fill="#f0e030"/><circle cx="69.01" cy="39.39" r="1.1" fill="#f0e030"/><circle cx="70.79" cy="37.61" r="1.1" fill="#f0e030"/><circle cx="23.26" cy="46.51" r="1.1" fill="#f0e030"/><circle cx="25.04" cy="44.73" r="1.1" fill="#f0e030"/><circle cx="29.85" cy="44.73" r="1.1" fill="#f0e030"/><circle cx="31.63" cy="46.51" r="1.1" fill="#f0e030"/><circle cx="36.61" cy="46.51" r="1.1" fill="#f0e030"/><circle cx="38.39" cy="44.73" r="1.1" fill="#f0e030"/><circle cx="42.84" cy="44.73" r="1.1" fill="#f0e030"/><circle cx="44.62" cy="46.51" r="1.1" fill="#f0e030"/><circle cx="49.07" cy="46.51" r="1.1" fill="#f0e030"/><circle cx="50.85" cy="44.73" r="1.1" fill="#f0e030"/><circle cx="55.83" cy="44.73" r="1.1" fill="#f0e030"/><circle cx="57.61" cy="46.51" r="1.1" fill="#f0e030"/><circle cx="62.42" cy="46.51" r="1.1" fill="#f0e030"/><circle cx="64.2" cy="44.73" r="1.1" fill="#f0e030"/><circle cx="69.01" cy="44.73" r="1.1" fill="#f0e030"/><circle cx="70.79" cy="46.51" r="1.1" fill="#f0e030"/><circle cx="23.26" cy="50.96" r="1.1" fill="#f0e030"/><circle cx="25.04" cy="52.74" r="1.1" fill="#f0e030"/><circle cx="29.85" cy="52.74" r="1.1" fill="#f0e030"/><circle cx="31.63" cy="50.96" r="1.1" fill="#f0e030"/><circle cx="36.61" cy="50.96" r="1.1" fill="#f0e030"/><circle cx="38.39" cy="52.74" r="1.1" fill="#f0e030"/><circle cx="42.84" cy="52.74" r="1.1" fill="#f0e030"/><circle cx="44.62" cy="50.96" r="1.1" fill="#f0e030"/><circle cx="49.07" cy="50.96" r="1.1" fill="#f0e030"/><circle cx="50.85" cy="52.74" r="1.1" fill="#f0e030"/><circle cx="55.83" cy="52.74" r="1.1" fill="#f0e030"/><circle cx="57.61" cy="50.96" r="1.1" fill="#f0e030"/><circle cx="62.42" cy="50.96" r="1.1" fill="#f0e030"/><circle cx="64.2" cy="52.74" r="1.1" fill="#f0e030"/><circle cx="69.01" cy="52.74" r="1.1" fill="#f0e030"/><circle cx="70.79" cy="50.96" r="1.1" fill="#f0e030"/><circle cx="29.85" cy="57.19" r="1.1" fill="#f0e030"/><circle cx="31.63" cy="58.97" r="1.1" fill="#f0e030"/><circle cx="36.61" cy="58.97" r="1.1" fill="#f0e030"/><circle cx="38.39" cy="57.19" r="1.1" fill="#f0e030"/><circle cx="42.84" cy="57.19" r="1.1" fill="#f0e030"/><circle cx="44.62" cy="58.97" r="1.1" fill="#f0e030"/><circle cx="49.07" cy="58.97" r="1.1" fill="#f0e030"/><circle cx="50.85" cy="57.19" r="1.1" fill="#f0e030"/><circle cx="55.83" cy="57.19" r="1.1" fill="#f0e030"/><circle cx="57.61" cy="58.97" r="1.1" fill="#f0e030"/><circle cx="62.42" cy="58.97" r="1.1" fill="#f0e030"/><circle cx="64.2" cy="57.19" r="1.1" fill="#f0e030"/><path d="M19.68 14.45L23.28 18.05M23.28 14.45L19.68 18.05" stroke="#7a9060" stroke-width="0.6"/><path d="M25.91 8.219999999999999L29.51 11.82M29.51 8.219999999999999L25.91 11.82" stroke="#7a9060" stroke-width="0.6"/><path d="M65.07000000000001 8.219999999999999L68.67 11.82M68.67 8.219999999999999L65.07000000000001 11.82" stroke="#7a9060" stroke-width="0.6"/><path d="M71.3 14.45L74.89999999999999 18.05M74.89999999999999 14.45L71.3 18.05" stroke="#7a9060" stroke-width="0.6"/><path d="M19.68 53.61L23.28 57.209999999999994M23.28 53.61L19.68 57.209999999999994" stroke="#7a9060" stroke-width="0.6"/><path d="M25.91 59.84L29.51 63.44M29.51 59.84L25.91 63.44" stroke="#7a9060" stroke-width="0.6"/><path d="M65.07000000000001 59.84L68.67 63.44M68.67 59.84L65.07000000000001 63.44" stroke="#7a9060" stroke-width="0.6"/><path d="M71.3 53.61L74.89999999999999 57.209999999999994M74.89999999999999 53.61L71.3 57.209999999999994" stroke="#7a9060" stroke-width="0.6"/><circle cx="90.5" cy="63.5" r="1.3" fill="#d040d0"/><line x1="92" y1="63.5" x2="93.5" y2="63.5" stroke="#888" stroke-width="0.4"/><circle cx="90.5" cy="66.5" r="1.3" fill="#f0e020"/><line x1="92" y1="66.5" x2="93.5" y2="66.5" stroke="#888" stroke-width="0.4"/><circle cx="90.5" cy="69.5" r="1.3" fill="#30c040"/><line x1="92" y1="69.5" x2="93.5" y2="69.5" stroke="#888" stroke-width="0.4"/></svg>
<div class="ct" style="left:825px;top:99.4px"><b>Network with</b><br>4 atom(s) in parameter list<br>0 molecular, 1 polymeric unit(s)<br>1409 created atom(s)<br>&nbsp;= 137*P+5 820*S-2 452*Na+1<br>2964 created bond(s) (0<br>contacts, 0 H-bonds)<br>0 created molecule(s) (0 frag.)<br>0 cell edges<br>0 polyhedra (0 faces)<br>0 atom, 0 bond label(s)</div>
<div class="fr" style="left:29px;top:212px;height:92px"></div>
<svg class="a" style="left:34px;top:225px" width="95" height="66" viewBox="0 0 95 66"><rect width="95" height="66" fill="#000"/><line x1="8" y1="1" x2="8" y2="9" stroke="#a0a0a0" stroke-width="0.4" stroke-dasharray="1 1"/><line x1="8" y1="6" x2="12" y2="6" stroke="#a0a0a0" stroke-width="0.4" stroke-dasharray="1 1"/><circle cx="8" cy="6" r="0.6" fill="#a0a0a0"/><rect x="28.71" y="14.25" width="38.27" height="36.49" fill="none" stroke="#909090" stroke-width="0.6"/><rect x="32.27" y="16.92" width="32.04" height="31.15" fill="none" stroke="#909090" stroke-width="0.5"/><line x1="47.4" y1="14.25" x2="39.39" y2="18.7" stroke="#c08a2a" stroke-width="0.7"/><line x1="47.4" y1="14.25" x2="42.42" y2="25.46" stroke="#c08a2a" stroke-width="0.7"/><line x1="47.4" y1="14.25" x2="55.41" y2="24.04" stroke="#c08a2a" stroke-width="0.7"/><line x1="30.49" y1="15.14" x2="39.39" y2="18.7" stroke="#c08a2a" stroke-width="0.7"/><line x1="28.71" y1="33.83" x2="42.42" y2="25.46" stroke="#c08a2a" stroke-width="0.7"/><line x1="28.71" y1="33.83" x2="40.64" y2="37.92" stroke="#c08a2a" stroke-width="0.7"/><line x1="31.38" y1="32.05" x2="34.94" y2="21.9" stroke="#c08a2a" stroke-width="0.7"/><line x1="61.64" y1="33.83" x2="52.38" y2="27.6" stroke="#c08a2a" stroke-width="0.7"/><line x1="61.64" y1="33.83" x2="53.63" y2="37.92" stroke="#c08a2a" stroke-width="0.7"/><line x1="64.31" y1="32.05" x2="59.86" y2="20.48" stroke="#c08a2a" stroke-width="0.7"/><line x1="47.4" y1="48.96" x2="40.64" y2="37.92" stroke="#c08a2a" stroke-width="0.7"/><line x1="47.4" y1="48.96" x2="53.63" y2="37.92" stroke="#c08a2a" stroke-width="0.7"/><line x1="30.49" y1="49.85" x2="37.61" y2="41.84" stroke="#c08a2a" stroke-width="0.7"/><line x1="62.53" y1="49.85" x2="60.22" y2="53.94" stroke="#c08a2a" stroke-width="0.7"/><line x1="30.49" y1="15.14" x2="26.04" y2="20.12" stroke="#c08a2a" stroke-width="0.7"/><line x1="28.71" y1="17.81" x2="22.48" y2="11.22" stroke="#c08a2a" stroke-width="0.7"/><line x1="61.64" y1="17.81" x2="65.56" y2="11.94" stroke="#c08a2a" stroke-width="0.7"/><line x1="28.71" y1="49.85" x2="22.12" y2="56.97" stroke="#c08a2a" stroke-width="0.7"/><line x1="61.64" y1="49.85" x2="68.4" y2="55.19" stroke="#c08a2a" stroke-width="0.7"/><line x1="47.4" y1="32.05" x2="42.42" y2="25.46" stroke="#c08a2a" stroke-width="0.7"/><line x1="47.4" y1="32.05" x2="53.63" y2="37.92" stroke="#c08a2a" stroke-width="0.7"/><circle cx="28.71" cy="17.81" r="1.4" fill="#d040d0"/><circle cx="61.64" cy="17.81" r="1.4" fill="#d040d0"/><circle cx="47.4" cy="32.05" r="1.4" fill="#d040d0"/><circle cx="28.71" cy="49.85" r="1.4" fill="#d040d0"/><circle cx="61.64" cy="49.85" r="1.4" fill="#d040d0"/><circle cx="30.49" cy="15.14" r="1.5" fill="#f0f0f0"/><circle cx="47.4" cy="14.25" r="1.5" fill="#f0f0f0"/><circle cx="49.18" cy="13.72" r="1.5" fill="#f0f0f0"/><circle cx="28.71" cy="33.83" r="1.5" fill="#f0f0f0"/><circle cx="31.38" cy="32.05" r="1.5" fill="#f0f0f0"/><circle cx="46.51" cy="33.83" r="1.5" fill="#f0f0f0"/><circle cx="61.64" cy="33.83" r="1.5" fill="#f0f0f0"/><circle cx="64.31" cy="32.05" r="1.5" fill="#f0f0f0"/><circle cx="30.49" cy="49.85" r="1.5" fill="#f0f0f0"/><circle cx="47.4" cy="48.96" r="1.5" fill="#f0f0f0"/><circle cx="62.53" cy="49.85" r="1.5" fill="#f0f0f0"/><circle cx="22.48" cy="11.22" r="2.5" fill="#f0e020"/><circle cx="27.29" cy="7.66" r="2.5" fill="#f0e020"/><circle cx="32.27" cy="11.58" r="2.5" fill="#f0e020"/><circle cx="36.72" cy="8.38" r="2.5" fill="#f0e020"/><circle cx="26.04" cy="20.12" r="2.5" fill="#f0e020"/><circle cx="21.95" cy="24.04" r="2.5" fill="#f0e020"/><circle cx="34.94" cy="21.9" r="2.5" fill="#f0e020"/><circle cx="39.39" cy="18.7" r="2.5" fill="#f0e020"/><circle cx="55.41" cy="11.58" r="2.5" fill="#f0e020"/><circle cx="60.22" cy="8.02" r="2.5" fill="#f0e020"/><circle cx="65.56" cy="11.94" r="2.5" fill="#f0e020"/><circle cx="70.18" cy="8.38" r="2.5" fill="#f0e020"/><circle cx="59.86" cy="20.48" r="2.5" fill="#f0e020"/><circle cx="68.4" cy="22.26" r="2.5" fill="#f0e020"/><circle cx="73.21" cy="18.7" r="2.5" fill="#f0e020"/><circle cx="42.42" cy="25.46" r="2.5" fill="#f0e020"/><circle cx="52.38" cy="27.6" r="2.5" fill="#f0e020"/><circle cx="55.41" cy="24.04" r="2.5" fill="#f0e020"/><circle cx="40.64" cy="37.92" r="2.5" fill="#f0e020"/><circle cx="53.63" cy="37.92" r="2.5" fill="#f0e020"/><circle cx="22.48" cy="44.51" r="2.5" fill="#f0e020"/><circle cx="27.29" cy="40.95" r="2.5" fill="#f0e020"/><circle cx="32.8" cy="45.04" r="2.5" fill="#f0e020"/><circle cx="37.61" cy="41.84" r="2.5" fill="#f0e020"/><circle cx="39.92" cy="52.16" r="2.5" fill="#f0e020"/><circle cx="35.3" cy="55.19" r="2.5" fill="#f0e020"/><circle cx="26.93" cy="53.94" r="2.5" fill="#f0e020"/><circle cx="22.12" cy="56.97" r="2.5" fill="#f0e020"/><circle cx="55.94" cy="44.51" r="2.5" fill="#f0e020"/><circle cx="60.75" cy="41.48" r="2.5" fill="#f0e020"/><circle cx="66.09" cy="45.04" r="2.5" fill="#f0e020"/><circle cx="70.54" cy="41.84" r="2.5" fill="#f0e020"/><circle cx="73.21" cy="52.16" r="2.5" fill="#f0e020"/><circle cx="68.4" cy="55.19" r="2.5" fill="#f0e020"/><circle cx="60.22" cy="53.94" r="2.5" fill="#f0e020"/><circle cx="55.41" cy="57.5" r="2.5" fill="#f0e020"/><circle cx="90.5" cy="57.5" r="1.3" fill="#d040d0"/><line x1="92" y1="57.5" x2="93.5" y2="57.5" stroke="#888" stroke-width="0.4"/><circle cx="90.5" cy="60.5" r="1.3" fill="#f0e020"/><line x1="92" y1="60.5" x2="93.5" y2="60.5" stroke="#888" stroke-width="0.4"/><circle cx="90.5" cy="63.5" r="1.3" fill="#f0f0f0"/><line x1="92" y1="63.5" x2="93.5" y2="63.5" stroke="#888" stroke-width="0.4"/></svg>
<div class="ct" style="left:139.5px;top:212.1px"><b>Picture 5</b><br>4 atom(s) in parameter list<br>0 molecular, 1 polymeric unit(s)<br>59 created atom(s)<br>&nbsp;= 9*P+5 36*S-2 14*Na+1<br>64 created bond(s) (0 contacts,<br>0 H-bonds)<br>0 created molecule(s) (0 frag.)<br>12 cell edges<br>0 polyhedra (0 faces)<br>0 atom, 0 bond label(s)</div>
<div class="fr tabbed" style="left:257px;top:212px;height:92px"><div class="tab"></div></div>
<svg class="a" style="left:262px;top:225px" width="96" height="66" viewBox="0 0 96 66"><rect width="96" height="66" fill="#000"/><line x1="8" y1="1" x2="8" y2="9" stroke="#a0a0a0" stroke-width="0.4" stroke-dasharray="1 1"/><line x1="8" y1="6" x2="12" y2="6" stroke="#a0a0a0" stroke-width="0.4" stroke-dasharray="1 1"/><circle cx="8" cy="6" r="0.6" fill="#a0a0a0"/><rect x="28.71" y="13.36" width="38.27" height="37.38" fill="none" stroke="#909090" stroke-width="0.6"/><line x1="47.4" y1="14.78" x2="39.92" y2="18.7" stroke="#c08a2a" stroke-width="0.7"/><line x1="47.4" y1="14.78" x2="42.42" y2="25.46" stroke="#c08a2a" stroke-width="0.7"/><line x1="47.4" y1="14.78" x2="52.74" y2="27.6" stroke="#c08a2a" stroke-width="0.7"/><line x1="30.49" y1="33.3" x2="42.42" y2="25.46" stroke="#c08a2a" stroke-width="0.7"/><line x1="30.49" y1="33.3" x2="40.64" y2="37.92" stroke="#c08a2a" stroke-width="0.7"/><line x1="63.42" y1="32.58" x2="52.74" y2="27.6" stroke="#c08a2a" stroke-width="0.7"/><line x1="63.42" y1="32.58" x2="53.63" y2="37.92" stroke="#c08a2a" stroke-width="0.7"/><line x1="47.4" y1="48.96" x2="40.64" y2="37.92" stroke="#c08a2a" stroke-width="0.7"/><line x1="47.4" y1="48.96" x2="53.63" y2="37.92" stroke="#c08a2a" stroke-width="0.7"/><line x1="30.49" y1="33.3" x2="39.92" y2="52.16" stroke="#c08a2a" stroke-width="0.7"/><line x1="63.42" y1="32.58" x2="73.21" y2="18.7" stroke="#c08a2a" stroke-width="0.7"/><line x1="45.26" y1="34.19" x2="52.74" y2="27.6" stroke="#c08a2a" stroke-width="0.7"/><line x1="34.05" y1="23.15" x2="39.92" y2="18.7" stroke="#c08a2a" stroke-width="0.7"/><line x1="66.98" y1="23.15" x2="73.21" y2="18.7" stroke="#c08a2a" stroke-width="0.7"/><line x1="34.05" y1="57.86" x2="39.92" y2="52.16" stroke="#c08a2a" stroke-width="0.7"/><line x1="66.98" y1="57.86" x2="73.21" y2="52.16" stroke="#c08a2a" stroke-width="0.7"/><line x1="28.71" y1="34.36" x2="27.46" y2="41.48" stroke="#c08a2a" stroke-width="0.7"/><line x1="61.64" y1="34.36" x2="60.75" y2="41.48" stroke="#c08a2a" stroke-width="0.7"/><polygon points="22.12,12.65 23.55,11.58 33.34,12.29 34.05,22.62 32.63,24.4 22.48,23.68" fill="#a46a8c" fill-opacity="1"/><polygon points="22.12,12.65 23.55,11.58 33.34,12.29 28.09,17.99" fill="#c88aac" fill-opacity="1"/><polygon points="22.48,23.68 28.09,17.99 32.63,24.4" fill="#c09068" fill-opacity="0.8"/><line x1="22.12" y1="12.65" x2="32.63" y2="24.4" stroke="#d8a0c0" stroke-width="0.5"/><line x1="33.34" y1="12.29" x2="22.48" y2="23.68" stroke="#d8a0c0" stroke-width="0.5"/><circle cx="22.12" cy="12.65" r="0.8" fill="#f0e020"/><circle cx="23.55" cy="11.58" r="0.8" fill="#f0e020"/><circle cx="33.34" cy="12.29" r="0.8" fill="#f0e020"/><circle cx="34.05" cy="22.62" r="0.8" fill="#f0e020"/><circle cx="32.63" cy="24.4" r="0.8" fill="#f0e020"/><circle cx="22.48" cy="23.68" r="0.8" fill="#f0e020"/><polygon points="55.41,12.65 56.83,11.58 66.62,12.29 67.34,22.62 65.91,24.4 55.77,23.68" fill="#a46a8c" fill-opacity="1"/><polygon points="55.41,12.65 56.83,11.58 66.62,12.29 61.37,17.99" fill="#c88aac" fill-opacity="1"/><polygon points="55.77,23.68 61.37,17.99 65.91,24.4" fill="#c09068" fill-opacity="0.8"/><line x1="55.41" y1="12.65" x2="65.91" y2="24.4" stroke="#d8a0c0" stroke-width="0.5"/><line x1="66.62" y1="12.29" x2="55.77" y2="23.68" stroke="#d8a0c0" stroke-width="0.5"/><circle cx="55.41" cy="12.65" r="0.8" fill="#f0e020"/><circle cx="56.83" cy="11.58" r="0.8" fill="#f0e020"/><circle cx="66.62" cy="12.29" r="0.8" fill="#f0e020"/><circle cx="67.34" cy="22.62" r="0.8" fill="#f0e020"/><circle cx="65.91" cy="24.4" r="0.8" fill="#f0e020"/><circle cx="55.77" cy="23.68" r="0.8" fill="#f0e020"/><polygon points="22.12,45.58 23.55,44.51 33.87,45.22 34.58,56.44 33.16,58.22 22.48,57.5" fill="#a46a8c" fill-opacity="1"/><polygon points="22.12,45.58 23.55,44.51 33.87,45.22 28.35,51.36" fill="#c88aac" fill-opacity="1"/><polygon points="22.48,57.5 28.35,51.36 33.16,58.22" fill="#c09068" fill-opacity="0.8"/><line x1="22.12" y1="45.58" x2="33.16" y2="58.22" stroke="#d8a0c0" stroke-width="0.5"/><line x1="33.87" y1="45.22" x2="22.48" y2="57.5" stroke="#d8a0c0" stroke-width="0.5"/><circle cx="22.12" cy="45.58" r="0.8" fill="#f0e020"/><circle cx="23.55" cy="44.51" r="0.8" fill="#f0e020"/><circle cx="33.87" cy="45.22" r="0.8" fill="#f0e020"/><circle cx="34.58" cy="56.44" r="0.8" fill="#f0e020"/><circle cx="33.16" cy="58.22" r="0.8" fill="#f0e020"/><circle cx="22.48" cy="57.5" r="0.8" fill="#f0e020"/><polygon points="55.41,45.58 56.83,44.51 67.16,45.22 67.87,56.44 66.45,58.22 55.77,57.5" fill="#a46a8c" fill-opacity="1"/><polygon points="55.41,45.58 56.83,44.51 67.16,45.22 61.64,51.36" fill="#c88aac" fill-opacity="1"/><polygon points="55.77,57.5 61.64,51.36 66.45,58.22" fill="#c09068" fill-opacity="0.8"/><line x1="55.41" y1="45.58" x2="66.45" y2="58.22" stroke="#d8a0c0" stroke-width="0.5"/><line x1="67.16" y1="45.22" x2="55.77" y2="57.5" stroke="#d8a0c0" stroke-width="0.5"/><circle cx="55.41" cy="45.58" r="0.8" fill="#f0e020"/><circle cx="56.83" cy="44.51" r="0.8" fill="#f0e020"/><circle cx="67.16" cy="45.22" r="0.8" fill="#f0e020"/><circle cx="67.87" cy="56.44" r="0.8" fill="#f0e020"/><circle cx="66.45" cy="58.22" r="0.8" fill="#f0e020"/><circle cx="55.77" cy="57.5" r="0.8" fill="#f0e020"/><circle cx="47.4" cy="32.05" r="1.4" fill="#d040d0"/><circle cx="47.4" cy="14.78" r="1.5" fill="#f0f0f0"/><circle cx="49.18" cy="13.72" r="1.5" fill="#f0f0f0"/><circle cx="30.49" cy="33.3" r="1.5" fill="#f0f0f0"/><circle cx="28.71" cy="34.36" r="1.5" fill="#f0f0f0"/><circle cx="63.42" cy="32.58" r="1.5" fill="#f0f0f0"/><circle cx="61.64" cy="34.36" r="1.5" fill="#f0f0f0"/><circle cx="45.26" cy="34.19" r="1.5" fill="#f0f0f0"/><circle cx="47.4" cy="48.96" r="1.5" fill="#f0f0f0"/><circle cx="49.18" cy="48.07" r="1.5" fill="#f0f0f0"/><circle cx="27.29" cy="8.02" r="2.6" fill="#f0e020"/><circle cx="37.25" cy="8.55" r="2.6" fill="#f0e020"/><circle cx="39.92" cy="18.7" r="2.6" fill="#f0e020"/><circle cx="60.75" cy="8.38" r="2.6" fill="#f0e020"/><circle cx="70.54" cy="8.55" r="2.6" fill="#f0e020"/><circle cx="73.21" cy="18.7" r="2.6" fill="#f0e020"/><circle cx="42.42" cy="25.46" r="2.6" fill="#f0e020"/><circle cx="52.74" cy="27.6" r="2.6" fill="#f0e020"/><circle cx="40.64" cy="37.92" r="2.6" fill="#f0e020"/><circle cx="53.63" cy="37.92" r="2.6" fill="#f0e020"/><circle cx="27.46" cy="41.48" r="2.6" fill="#f0e020"/><circle cx="37.25" cy="41.84" r="2.6" fill="#f0e020"/><circle cx="39.92" cy="52.16" r="2.6" fill="#f0e020"/><circle cx="60.75" cy="41.48" r="2.6" fill="#f0e020"/><circle cx="70.54" cy="41.84" r="2.6" fill="#f0e020"/><circle cx="73.21" cy="52.16" r="2.6" fill="#f0e020"/><circle cx="91.5" cy="57.5" r="1.3" fill="#d040d0"/><line x1="93" y1="57.5" x2="94.5" y2="57.5" stroke="#888" stroke-width="0.4"/><circle cx="91.5" cy="60.5" r="1.3" fill="#f0e020"/><line x1="93" y1="60.5" x2="94.5" y2="60.5" stroke="#888" stroke-width="0.4"/><circle cx="91.5" cy="63.5" r="1.3" fill="#f0f0f0"/><line x1="93" y1="63.5" x2="94.5" y2="63.5" stroke="#888" stroke-width="0.4"/></svg>
<div class="ct" style="left:368px;top:212.1px"><b>Picture 6</b><br>4 atom(s) in parameter list<br>0 molecular, 1 polymeric unit(s)<br>59 created atom(s)<br>&nbsp;= 9*P+5 36*S-2 14*Na+1<br>64 created bond(s) (0 contacts,<br>0 H-bonds)<br>0 created molecule(s) (0 frag.)<br>12 cell edges<br>4 polyhedra (16 faces)<br>0 atom, 0 bond label(s)</div>
<div class="fr tabbed" style="left:485px;top:212px;height:92px"><div class="tab"></div></div>
<svg class="a" style="left:490px;top:225px" width="96" height="66" viewBox="0 0 96 66"><rect width="96" height="66" fill="#000"/><line x1="8" y1="1" x2="8" y2="9" stroke="#a0a0a0" stroke-width="0.4" stroke-dasharray="1 1"/><line x1="8" y1="6" x2="12" y2="6" stroke="#a0a0a0" stroke-width="0.4" stroke-dasharray="1 1"/><circle cx="8" cy="6" r="0.6" fill="#a0a0a0"/><rect x="28.71" y="15.14" width="37.38" height="36.49" fill="none" stroke="#909090" stroke-width="0.6"/><line x1="20.7" y1="12.47" x2="18.92" y2="8.91" stroke="#c08a2a" stroke-width="0.8"/><line x1="29.6" y1="2.68" x2="32.27" y2="12.47" stroke="#c08a2a" stroke-width="0.8"/><line x1="34.94" y1="2.68" x2="34.05" y2="12.47" stroke="#c08a2a" stroke-width="0.8"/><line x1="65.2" y1="2.68" x2="61.64" y2="12.47" stroke="#c08a2a" stroke-width="0.8"/><line x1="68.76" y1="2.68" x2="66.98" y2="13.36" stroke="#c08a2a" stroke-width="0.8"/><line x1="79.44" y1="15.14" x2="66.98" y2="16.92" stroke="#c08a2a" stroke-width="0.8"/><line x1="77.66" y1="45.4" x2="67.87" y2="47.18" stroke="#c08a2a" stroke-width="0.8"/><line x1="20.7" y1="45.4" x2="22.48" y2="48.96" stroke="#c08a2a" stroke-width="0.8"/><line x1="68.76" y1="61.42" x2="66.98" y2="56.08" stroke="#c08a2a" stroke-width="0.8"/><line x1="34.94" y1="61.42" x2="34.05" y2="56.08" stroke="#c08a2a" stroke-width="0.8"/><line x1="18.92" y1="59.64" x2="22.48" y2="56.08" stroke="#c08a2a" stroke-width="0.8"/><line x1="80.33" y1="50.74" x2="67.87" y2="50.74" stroke="#c08a2a" stroke-width="0.8"/><line x1="20.7" y1="15.14" x2="29.6" y2="16.92" stroke="#c08a2a" stroke-width="0.8"/><line x1="47.4" y1="16.03" x2="39.39" y2="20.12" stroke="#c08a2a" stroke-width="0.8"/><line x1="47.4" y1="16.03" x2="42.06" y2="27.24" stroke="#c08a2a" stroke-width="0.8"/><line x1="47.4" y1="16.03" x2="51.85" y2="29.02" stroke="#c08a2a" stroke-width="0.8"/><line x1="28.71" y1="34.72" x2="42.06" y2="27.24" stroke="#c08a2a" stroke-width="0.8"/><line x1="28.71" y1="34.72" x2="39.92" y2="39.7" stroke="#c08a2a" stroke-width="0.8"/><line x1="62.53" y1="34.72" x2="51.85" y2="29.02" stroke="#c08a2a" stroke-width="0.8"/><line x1="62.53" y1="34.72" x2="52.74" y2="39.17" stroke="#c08a2a" stroke-width="0.8"/><line x1="46.51" y1="49.85" x2="39.92" y2="39.7" stroke="#c08a2a" stroke-width="0.8"/><line x1="46.51" y1="49.85" x2="52.74" y2="39.17" stroke="#c08a2a" stroke-width="0.8"/><line x1="28.71" y1="34.72" x2="39.39" y2="53.41" stroke="#c08a2a" stroke-width="0.8"/><line x1="62.53" y1="34.72" x2="72.32" y2="20.12" stroke="#c08a2a" stroke-width="0.8"/><line x1="44.73" y1="35.25" x2="51.85" y2="29.02" stroke="#c08a2a" stroke-width="0.8"/><line x1="34.05" y1="24.93" x2="39.39" y2="20.12" stroke="#c08a2a" stroke-width="0.8"/><line x1="66.98" y1="24.93" x2="72.32" y2="20.12" stroke="#c08a2a" stroke-width="0.8"/><line x1="34.05" y1="58.75" x2="39.39" y2="53.41" stroke="#c08a2a" stroke-width="0.8"/><line x1="66.98" y1="58.75" x2="72.32" y2="53.41" stroke="#c08a2a" stroke-width="0.8"/><line x1="28.71" y1="34.72" x2="26.93" y2="42.73" stroke="#c08a2a" stroke-width="0.8"/><line x1="62.53" y1="34.72" x2="60.22" y2="43.09" stroke="#c08a2a" stroke-width="0.8"/><line x1="36.72" y1="9.44" x2="47.4" y2="16.03" stroke="#c08a2a" stroke-width="0.8"/><line x1="59.86" y1="9.44" x2="47.4" y2="16.03" stroke="#c08a2a" stroke-width="0.8"/><line x1="26.93" y1="42.73" x2="46.51" y2="49.85" stroke="#c08a2a" stroke-width="0.8"/><line x1="70.18" y1="43.62" x2="46.51" y2="49.85" stroke="#c08a2a" stroke-width="0.8"/><polygon points="21.59,13.54 23.01,12.47 33.34,13.18 34.05,24.04 32.63,25.82 21.95,25.11" fill="#a46a8c" fill-opacity="1"/><polygon points="21.59,13.54 23.01,12.47 33.34,13.18 27.82,19.14" fill="#c88aac" fill-opacity="1"/><polygon points="21.95,25.11 27.82,19.14 32.63,25.82" fill="#c09068" fill-opacity="0.8"/><line x1="21.59" y1="13.54" x2="32.63" y2="25.82" stroke="#d8a0c0" stroke-width="0.5"/><line x1="33.34" y1="13.18" x2="21.95" y2="25.11" stroke="#d8a0c0" stroke-width="0.5"/><circle cx="21.59" cy="13.54" r="0.8" fill="#f0e020"/><circle cx="23.01" cy="12.47" r="0.8" fill="#f0e020"/><circle cx="33.34" cy="13.18" r="0.8" fill="#f0e020"/><circle cx="34.05" cy="24.04" r="0.8" fill="#f0e020"/><circle cx="32.63" cy="25.82" r="0.8" fill="#f0e020"/><circle cx="21.95" cy="25.11" r="0.8" fill="#f0e020"/><polygon points="54.52,13.54 55.94,12.47 66.27,13.18 66.98,24.04 65.56,25.82 54.88,25.11" fill="#a46a8c" fill-opacity="1"/><polygon points="54.52,13.54 55.94,12.47 66.27,13.18 60.75,19.14" fill="#c88aac" fill-opacity="1"/><polygon points="54.88,25.11 60.75,19.14 65.56,25.82" fill="#c09068" fill-opacity="0.8"/><line x1="54.52" y1="13.54" x2="65.56" y2="25.82" stroke="#d8a0c0" stroke-width="0.5"/><line x1="66.27" y1="13.18" x2="54.88" y2="25.11" stroke="#d8a0c0" stroke-width="0.5"/><circle cx="54.52" cy="13.54" r="0.8" fill="#f0e020"/><circle cx="55.94" cy="12.47" r="0.8" fill="#f0e020"/><circle cx="66.27" cy="13.18" r="0.8" fill="#f0e020"/><circle cx="66.98" cy="24.04" r="0.8" fill="#f0e020"/><circle cx="65.56" cy="25.82" r="0.8" fill="#f0e020"/><circle cx="54.88" cy="25.11" r="0.8" fill="#f0e020"/><polygon points="21.59,47.36 23.01,46.29 33.34,47.0 34.05,57.86 32.63,59.64 21.95,58.93" fill="#a46a8c" fill-opacity="1"/><polygon points="21.59,47.36 23.01,46.29 33.34,47.0 27.82,52.96" fill="#c88aac" fill-opacity="1"/><polygon points="21.95,58.93 27.82,52.96 32.63,59.64" fill="#c09068" fill-opacity="0.8"/><line x1="21.59" y1="47.36" x2="32.63" y2="59.64" stroke="#d8a0c0" stroke-width="0.5"/><line x1="33.34" y1="47.0" x2="21.95" y2="58.93" stroke="#d8a0c0" stroke-width="0.5"/><circle cx="21.59" cy="47.36" r="0.8" fill="#f0e020"/><circle cx="23.01" cy="46.29" r="0.8" fill="#f0e020"/><circle cx="33.34" cy="47.0" r="0.8" fill="#f0e020"/><circle cx="34.05" cy="57.86" r="0.8" fill="#f0e020"/><circle cx="32.63" cy="59.64" r="0.8" fill="#f0e020"/><circle cx="21.95" cy="58.93" r="0.8" fill="#f0e020"/><polygon points="54.52,47.36 55.94,46.29 67.16,47.0 67.87,57.86 66.45,59.64 54.88,58.93" fill="#a46a8c" fill-opacity="1"/><polygon points="54.52,47.36 55.94,46.29 67.16,47.0 61.19,52.96" fill="#c88aac" fill-opacity="1"/><polygon points="54.88,58.93 61.19,52.96 66.45,59.64" fill="#c09068" fill-opacity="0.8"/><line x1="54.52" y1="47.36" x2="66.45" y2="59.64" stroke="#d8a0c0" stroke-width="0.5"/><line x1="67.16" y1="47.0" x2="54.88" y2="58.93" stroke="#d8a0c0" stroke-width="0.5"/><circle cx="54.52" cy="47.36" r="0.8" fill="#f0e020"/><circle cx="55.94" cy="46.29" r="0.8" fill="#f0e020"/><circle cx="67.16" cy="47.0" r="0.8" fill="#f0e020"/><circle cx="67.87" cy="57.86" r="0.8" fill="#f0e020"/><circle cx="66.45" cy="59.64" r="0.8" fill="#f0e020"/><circle cx="54.88" cy="58.93" r="0.8" fill="#f0e020"/><circle cx="47.4" cy="33.83" r="1.4" fill="#d040d0"/><circle cx="47.4" cy="16.03" r="1.5" fill="#f0f0f0"/><circle cx="49.18" cy="15.14" r="1.5" fill="#f0f0f0"/><circle cx="28.71" cy="34.72" r="1.5" fill="#f0f0f0"/><circle cx="30.49" cy="33.83" r="1.5" fill="#f0f0f0"/><circle cx="62.53" cy="34.72" r="1.5" fill="#f0f0f0"/><circle cx="64.31" cy="33.83" r="1.5" fill="#f0f0f0"/><circle cx="44.73" cy="35.25" r="1.5" fill="#f0f0f0"/><circle cx="46.51" cy="49.85" r="1.5" fill="#f0f0f0"/><circle cx="48.29" cy="48.96" r="1.5" fill="#f0f0f0"/><circle cx="26.57" cy="9.44" r="2.6" fill="#f0e020"/><circle cx="36.72" cy="9.44" r="2.6" fill="#f0e020"/><circle cx="39.39" cy="20.12" r="2.6" fill="#f0e020"/><circle cx="59.86" cy="9.44" r="2.6" fill="#f0e020"/><circle cx="70.18" cy="9.8" r="2.6" fill="#f0e020"/><circle cx="72.32" cy="20.12" r="2.6" fill="#f0e020"/><circle cx="42.06" cy="27.24" r="2.6" fill="#f0e020"/><circle cx="51.85" cy="29.02" r="2.6" fill="#f0e020"/><circle cx="39.92" cy="39.7" r="2.6" fill="#f0e020"/><circle cx="52.74" cy="39.17" r="2.6" fill="#f0e020"/><circle cx="26.93" cy="42.73" r="2.6" fill="#f0e020"/><circle cx="36.72" cy="43.62" r="2.6" fill="#f0e020"/><circle cx="39.39" cy="53.41" r="2.6" fill="#f0e020"/><circle cx="60.22" cy="43.09" r="2.6" fill="#f0e020"/><circle cx="70.18" cy="43.62" r="2.6" fill="#f0e020"/><circle cx="72.32" cy="53.41" r="2.6" fill="#f0e020"/><circle cx="91.5" cy="57.5" r="1.3" fill="#d040d0"/><line x1="93" y1="57.5" x2="94.5" y2="57.5" stroke="#888" stroke-width="0.4"/><circle cx="91.5" cy="60.5" r="1.3" fill="#f0e020"/><line x1="93" y1="60.5" x2="94.5" y2="60.5" stroke="#888" stroke-width="0.4"/><circle cx="91.5" cy="63.5" r="1.3" fill="#f0f0f0"/><line x1="93" y1="63.5" x2="94.5" y2="63.5" stroke="#888" stroke-width="0.4"/></svg>
<div class="ct" style="left:596.5px;top:212.1px"><b>Picture 7</b><br>4 atom(s) in parameter list<br>0 molecular, 1 polymeric unit(s)<br>81 created atom(s)<br>&nbsp;= 9*P+5 36*S-2 36*Na+1<br>109 created bond(s) (0<br>contacts, 0 H-bonds)<br>0 created molecule(s) (0 frag.)<br>12 cell edges<br>4 polyhedra (16 faces)<br>0 atom, 0 bond label(s)</div>
<div class="fr" style="left:713px;top:212px;height:92px"></div>
<svg class="a" style="left:719px;top:225px" width="95" height="66" viewBox="0 0 95 66"><rect width="95" height="66" fill="#000"/><line x1="8" y1="1" x2="8" y2="9" stroke="#a0a0a0" stroke-width="0.4" stroke-dasharray="1 1"/><line x1="8" y1="6" x2="12" y2="6" stroke="#a0a0a0" stroke-width="0.4" stroke-dasharray="1 1"/><circle cx="8" cy="6" r="0.6" fill="#a0a0a0"/><rect x="20.91" y="6.68" width="53.99" height="52.76" fill="none" stroke="#909090" stroke-width="0.6"/><rect x="27.66" y="12.2" width="42.33" height="42.33" fill="none" stroke="#909090" stroke-width="0.5"/><line x1="47.9" y1="8.52" x2="54.65" y2="26.31" stroke="#c08a2a" stroke-width="0.8"/><line x1="54.65" y1="26.31" x2="69.99" y2="33.67" stroke="#c08a2a" stroke-width="0.8"/><line x1="69.99" y1="33.67" x2="55.88" y2="40.42" stroke="#c08a2a" stroke-width="0.8"/><line x1="55.88" y1="40.42" x2="49.13" y2="55.15" stroke="#c08a2a" stroke-width="0.8"/><line x1="49.13" y1="55.15" x2="38.09" y2="41.04" stroke="#c08a2a" stroke-width="0.8"/><line x1="38.09" y1="41.04" x2="22.75" y2="33.67" stroke="#c08a2a" stroke-width="0.8"/><line x1="22.75" y1="33.67" x2="41.15" y2="23.86" stroke="#c08a2a" stroke-width="0.8"/><line x1="41.15" y1="23.86" x2="47.9" y2="8.52" stroke="#c08a2a" stroke-width="0.8"/><line x1="46.67" y1="9.13" x2="30.72" y2="18.34" stroke="#c08a2a" stroke-width="0.6"/><line x1="50.36" y1="7.29" x2="65.69" y2="16.5" stroke="#c08a2a" stroke-width="0.6"/><line x1="24.59" y1="32.45" x2="30.72" y2="18.34" stroke="#c08a2a" stroke-width="0.6"/><line x1="71.21" y1="32.45" x2="65.69" y2="16.5" stroke="#c08a2a" stroke-width="0.6"/><line x1="24.59" y1="32.45" x2="33.79" y2="45.94" stroke="#c08a2a" stroke-width="0.6"/><line x1="47.29" y1="56.37" x2="33.79" y2="45.94" stroke="#c08a2a" stroke-width="0.6"/><line x1="50.97" y1="53.92" x2="60.17" y2="50.24" stroke="#c08a2a" stroke-width="0.6"/><line x1="68.15" y1="34.9" x2="60.17" y2="50.24" stroke="#c08a2a" stroke-width="0.6"/><line x1="23.36" y1="8.52" x2="30.72" y2="18.34" stroke="#c08a2a" stroke-width="0.6"/><line x1="70.6" y1="9.13" x2="65.69" y2="16.5" stroke="#c08a2a" stroke-width="0.6"/><line x1="23.98" y1="55.76" x2="33.79" y2="45.94" stroke="#c08a2a" stroke-width="0.6"/><line x1="70.6" y1="56.37" x2="60.17" y2="50.24" stroke="#c08a2a" stroke-width="0.6"/><line x1="30.72" y1="18.34" x2="41.15" y2="23.86" stroke="#c08a2a" stroke-width="0.6"/><line x1="65.69" y1="16.5" x2="54.65" y2="26.31" stroke="#c08a2a" stroke-width="0.6"/><line x1="33.79" y1="45.94" x2="38.09" y2="41.04" stroke="#c08a2a" stroke-width="0.6"/><line x1="60.17" y1="50.24" x2="55.88" y2="40.42" stroke="#c08a2a" stroke-width="0.6"/><line x1="24.59" y1="32.45" x2="54.65" y2="26.31" stroke="#c08a2a" stroke-width="0.6"/><line x1="68.15" y1="34.9" x2="38.09" y2="41.04" stroke="#c08a2a" stroke-width="0.6"/><line x1="46.67" y1="9.13" x2="55.88" y2="40.42" stroke="#c08a2a" stroke-width="0.6"/><line x1="50.97" y1="53.92" x2="41.15" y2="23.86" stroke="#c08a2a" stroke-width="0.6"/><polygon points="41.15,23.86 54.65,26.31 55.88,40.42 38.09,41.04" fill="#1e8a94" fill-opacity="1"/><polygon points="41.15,23.86 54.65,26.31 44.22,35.15" fill="#3aaab4" fill-opacity="1"/><polygon points="54.65,26.31 55.88,40.42 44.22,35.15" fill="#2a9aa4" fill-opacity="1"/><line x1="44.22" y1="35.15" x2="54.65" y2="26.31" stroke="#b8e060" stroke-width="0.5"/><circle cx="41.15" cy="23.86" r="0.9" fill="#f0e020"/><circle cx="54.65" cy="26.31" r="0.9" fill="#f0e020"/><circle cx="55.88" cy="40.42" r="0.9" fill="#f0e020"/><circle cx="38.09" cy="41.04" r="0.9" fill="#f0e020"/><circle cx="27.04" cy="6.68" r="1.7" fill="#d040d0"/><circle cx="20.91" cy="11.59" r="1.7" fill="#d040d0"/><circle cx="73.67" cy="7.29" r="1.7" fill="#d040d0"/><circle cx="66.92" cy="12.2" r="1.7" fill="#d040d0"/><circle cx="20.91" cy="58.83" r="1.7" fill="#d040d0"/><circle cx="27.04" cy="53.31" r="1.7" fill="#d040d0"/><circle cx="67.53" cy="58.83" r="1.7" fill="#d040d0"/><circle cx="73.67" cy="53.92" r="1.7" fill="#d040d0"/><circle cx="46.67" cy="9.13" r="1.8" fill="#f0f0f0"/><circle cx="50.36" cy="7.29" r="1.8" fill="#f0f0f0"/><circle cx="21.52" cy="34.9" r="1.8" fill="#f0f0f0"/><circle cx="24.59" cy="32.45" r="1.8" fill="#f0f0f0"/><circle cx="68.15" cy="34.9" r="1.8" fill="#f0f0f0"/><circle cx="71.21" cy="32.45" r="1.8" fill="#f0f0f0"/><circle cx="47.29" cy="56.37" r="1.8" fill="#f0f0f0"/><circle cx="50.97" cy="53.92" r="1.8" fill="#f0f0f0"/><circle cx="23.36" cy="8.52" r="1.8" fill="#f0f0f0"/><circle cx="70.6" cy="9.13" r="1.8" fill="#f0f0f0"/><circle cx="23.98" cy="55.76" r="1.8" fill="#f0f0f0"/><circle cx="70.6" cy="56.37" r="1.8" fill="#f0f0f0"/><circle cx="44.22" cy="35.15" r="1.8" fill="#f0f0f0"/><circle cx="30.72" cy="18.34" r="3.6" fill="#f0e020"/><circle cx="65.69" cy="16.5" r="3.6" fill="#f0e020"/><circle cx="33.79" cy="45.94" r="3.6" fill="#f0e020"/><circle cx="60.17" cy="50.24" r="3.6" fill="#f0e020"/><circle cx="90.5" cy="57.5" r="1.3" fill="#d040d0"/><line x1="92" y1="57.5" x2="93.5" y2="57.5" stroke="#888" stroke-width="0.4"/><circle cx="90.5" cy="60.5" r="1.3" fill="#f0e020"/><line x1="92" y1="60.5" x2="93.5" y2="60.5" stroke="#888" stroke-width="0.4"/><circle cx="90.5" cy="63.5" r="1.3" fill="#f0f0f0"/><line x1="92" y1="63.5" x2="93.5" y2="63.5" stroke="#888" stroke-width="0.4"/></svg>
<div class="ct" style="left:825px;top:212.1px"><b>Picture 8</b><br>4 atom(s) in parameter list<br>0 molecular, 1 polymeric unit(s)<br>31 created atom(s)<br>&nbsp;= 9*P+5 8*S-2 14*Na+1<br>36 created bond(s) (0 contacts,<br>0 H-bonds)<br>0 created molecule(s) (0 frag.)<br>12 cell edges<br>1 polyhedra (4 faces)<br>0 atom, 0 bond label(s)</div>
<div class="fr" style="left:29px;top:324px;height:92px"></div>
<svg class="a" style="left:34px;top:337px" width="95" height="66" viewBox="0 0 95 66"><rect width="95" height="66" fill="#000"/><line x1="8" y1="1" x2="8" y2="9" stroke="#a0a0a0" stroke-width="0.4" stroke-dasharray="1 1"/><line x1="8" y1="6" x2="12" y2="6" stroke="#a0a0a0" stroke-width="0.4" stroke-dasharray="1 1"/><circle cx="8" cy="6" r="0.6" fill="#a0a0a0"/><rect x="20.91" y="7.18" width="53.99" height="52.76" fill="none" stroke="#909090" stroke-width="0.6"/><rect x="27.66" y="12.7" width="42.33" height="42.33" fill="none" stroke="#909090" stroke-width="0.5"/><line x1="47.9" y1="9.02" x2="54.65" y2="26.81" stroke="#c08a2a" stroke-width="0.8"/><line x1="54.65" y1="26.81" x2="69.99" y2="34.17" stroke="#c08a2a" stroke-width="0.8"/><line x1="69.99" y1="34.17" x2="55.88" y2="40.92" stroke="#c08a2a" stroke-width="0.8"/><line x1="55.88" y1="40.92" x2="49.13" y2="55.65" stroke="#c08a2a" stroke-width="0.8"/><line x1="49.13" y1="55.65" x2="38.09" y2="41.54" stroke="#c08a2a" stroke-width="0.8"/><line x1="38.09" y1="41.54" x2="22.75" y2="34.17" stroke="#c08a2a" stroke-width="0.8"/><line x1="22.75" y1="34.17" x2="41.15" y2="24.36" stroke="#c08a2a" stroke-width="0.8"/><line x1="41.15" y1="24.36" x2="47.9" y2="9.02" stroke="#c08a2a" stroke-width="0.8"/><line x1="46.67" y1="9.63" x2="30.72" y2="18.84" stroke="#c08a2a" stroke-width="0.6"/><line x1="50.36" y1="7.79" x2="65.69" y2="17.0" stroke="#c08a2a" stroke-width="0.6"/><line x1="24.59" y1="32.95" x2="30.72" y2="18.84" stroke="#c08a2a" stroke-width="0.6"/><line x1="71.21" y1="32.95" x2="65.69" y2="17.0" stroke="#c08a2a" stroke-width="0.6"/><line x1="24.59" y1="32.95" x2="33.79" y2="46.44" stroke="#c08a2a" stroke-width="0.6"/><line x1="47.29" y1="56.87" x2="33.79" y2="46.44" stroke="#c08a2a" stroke-width="0.6"/><line x1="50.97" y1="54.42" x2="60.17" y2="50.74" stroke="#c08a2a" stroke-width="0.6"/><line x1="68.15" y1="35.4" x2="60.17" y2="50.74" stroke="#c08a2a" stroke-width="0.6"/><line x1="23.36" y1="9.02" x2="30.72" y2="18.84" stroke="#c08a2a" stroke-width="0.6"/><line x1="70.6" y1="9.63" x2="65.69" y2="17.0" stroke="#c08a2a" stroke-width="0.6"/><line x1="23.98" y1="56.26" x2="33.79" y2="46.44" stroke="#c08a2a" stroke-width="0.6"/><line x1="70.6" y1="56.87" x2="60.17" y2="50.74" stroke="#c08a2a" stroke-width="0.6"/><line x1="30.72" y1="18.84" x2="41.15" y2="24.36" stroke="#c08a2a" stroke-width="0.6"/><line x1="65.69" y1="17.0" x2="54.65" y2="26.81" stroke="#c08a2a" stroke-width="0.6"/><line x1="33.79" y1="46.44" x2="38.09" y2="41.54" stroke="#c08a2a" stroke-width="0.6"/><line x1="60.17" y1="50.74" x2="55.88" y2="40.92" stroke="#c08a2a" stroke-width="0.6"/><line x1="24.59" y1="32.95" x2="54.65" y2="26.81" stroke="#c08a2a" stroke-width="0.6"/><line x1="68.15" y1="35.4" x2="38.09" y2="41.54" stroke="#c08a2a" stroke-width="0.6"/><line x1="46.67" y1="9.63" x2="55.88" y2="40.92" stroke="#c08a2a" stroke-width="0.6"/><line x1="50.97" y1="54.42" x2="41.15" y2="24.36" stroke="#c08a2a" stroke-width="0.6"/><line x1="48.52" y1="9.02" x2="40.23" y2="0.74" stroke="#c89030" stroke-width="1.0"/><line x1="48.52" y1="9.02" x2="54.96" y2="0.74" stroke="#c89030" stroke-width="1.0"/><line x1="48.52" y1="9.02" x2="62.32" y2="4.42" stroke="#c89030" stroke-width="1.0"/><line x1="48.52" y1="9.02" x2="36.55" y2="15.46" stroke="#c89030" stroke-width="1.0"/><line x1="48.52" y1="9.02" x2="45.75" y2="0.74" stroke="#c89030" stroke-width="1.0"/><line x1="48.52" y1="9.02" x2="60.48" y2="13.62" stroke="#c89030" stroke-width="1.0"/><line x1="23.36" y1="34.17" x2="14.16" y2="24.97" stroke="#c89030" stroke-width="1.0"/><line x1="23.36" y1="34.17" x2="14.16" y2="41.54" stroke="#c89030" stroke-width="1.0"/><line x1="23.36" y1="34.17" x2="19.68" y2="21.29" stroke="#c89030" stroke-width="1.0"/><line x1="23.36" y1="34.17" x2="30.72" y2="47.06" stroke="#c89030" stroke-width="1.0"/><line x1="23.36" y1="34.17" x2="12.32" y2="34.17" stroke="#c89030" stroke-width="1.0"/><line x1="23.36" y1="34.17" x2="32.56" y2="23.13" stroke="#c89030" stroke-width="1.0"/><line x1="69.99" y1="33.56" x2="80.11" y2="24.36" stroke="#c89030" stroke-width="1.0"/><line x1="69.99" y1="33.56" x2="80.11" y2="43.68" stroke="#c89030" stroke-width="1.0"/><line x1="69.99" y1="33.56" x2="62.63" y2="21.6" stroke="#c89030" stroke-width="1.0"/><line x1="69.99" y1="33.56" x2="75.51" y2="47.37" stroke="#c89030" stroke-width="1.0"/><line x1="69.99" y1="33.56" x2="81.03" y2="34.48" stroke="#c89030" stroke-width="1.0"/><line x1="69.99" y1="33.56" x2="60.79" y2="43.68" stroke="#c89030" stroke-width="1.0"/><line x1="49.13" y1="55.65" x2="39.93" y2="63.93" stroke="#c89030" stroke-width="1.0"/><line x1="49.13" y1="55.65" x2="58.33" y2="63.93" stroke="#c89030" stroke-width="1.0"/><line x1="49.13" y1="55.65" x2="63.85" y2="58.41" stroke="#c89030" stroke-width="1.0"/><line x1="49.13" y1="55.65" x2="36.25" y2="51.05" stroke="#c89030" stroke-width="1.0"/><line x1="49.13" y1="55.65" x2="49.13" y2="63.93" stroke="#c89030" stroke-width="1.0"/><line x1="49.13" y1="55.65" x2="62.01" y2="49.21" stroke="#c89030" stroke-width="1.0"/><polygon points="41.15,24.36 54.65,26.81 55.88,40.92 38.09,41.54" fill="#1e8a94" fill-opacity="1"/><polygon points="41.15,24.36 54.65,26.81 44.22,35.65" fill="#3aaab4" fill-opacity="1"/><polygon points="54.65,26.81 55.88,40.92 44.22,35.65" fill="#2a9aa4" fill-opacity="1"/><line x1="44.22" y1="35.65" x2="54.65" y2="26.81" stroke="#b8e060" stroke-width="0.5"/><circle cx="41.15" cy="24.36" r="0.9" fill="#f0e020"/><circle cx="54.65" cy="26.81" r="0.9" fill="#f0e020"/><circle cx="55.88" cy="40.92" r="0.9" fill="#f0e020"/><circle cx="38.09" cy="41.54" r="0.9" fill="#f0e020"/><circle cx="27.04" cy="7.18" r="1.7" fill="#d040d0"/><circle cx="20.91" cy="12.09" r="1.7" fill="#d040d0"/><circle cx="73.67" cy="7.79" r="1.7" fill="#d040d0"/><circle cx="66.92" cy="12.7" r="1.7" fill="#d040d0"/><circle cx="20.91" cy="59.33" r="1.7" fill="#d040d0"/><circle cx="27.04" cy="53.81" r="1.7" fill="#d040d0"/><circle cx="67.53" cy="59.33" r="1.7" fill="#d040d0"/><circle cx="73.67" cy="54.42" r="1.7" fill="#d040d0"/><circle cx="46.67" cy="9.63" r="1.8" fill="#f0f0f0"/><circle cx="50.36" cy="7.79" r="1.8" fill="#f0f0f0"/><circle cx="21.52" cy="35.4" r="1.8" fill="#f0f0f0"/><circle cx="24.59" cy="32.95" r="1.8" fill="#f0f0f0"/><circle cx="68.15" cy="35.4" r="1.8" fill="#f0f0f0"/><circle cx="71.21" cy="32.95" r="1.8" fill="#f0f0f0"/><circle cx="47.29" cy="56.87" r="1.8" fill="#f0f0f0"/><circle cx="50.97" cy="54.42" r="1.8" fill="#f0f0f0"/><circle cx="23.36" cy="9.02" r="1.8" fill="#f0f0f0"/><circle cx="70.6" cy="9.63" r="1.8" fill="#f0f0f0"/><circle cx="23.98" cy="56.26" r="1.8" fill="#f0f0f0"/><circle cx="70.6" cy="56.87" r="1.8" fill="#f0f0f0"/><circle cx="44.22" cy="35.65" r="1.8" fill="#f0f0f0"/><circle cx="30.72" cy="18.84" r="3.6" fill="#f0e020"/><circle cx="65.69" cy="17.0" r="3.6" fill="#f0e020"/><circle cx="33.79" cy="46.44" r="3.6" fill="#f0e020"/><circle cx="60.17" cy="50.74" r="3.6" fill="#f0e020"/><circle cx="90.5" cy="57.5" r="1.3" fill="#d040d0"/><line x1="92" y1="57.5" x2="93.5" y2="57.5" stroke="#888" stroke-width="0.4"/><circle cx="90.5" cy="60.5" r="1.3" fill="#f0e020"/><line x1="92" y1="60.5" x2="93.5" y2="60.5" stroke="#888" stroke-width="0.4"/><circle cx="90.5" cy="63.5" r="1.3" fill="#f0f0f0"/><line x1="92" y1="63.5" x2="93.5" y2="63.5" stroke="#888" stroke-width="0.4"/></svg>
<div class="ct" style="left:139.5px;top:324.3px"><b>Picture 9</b><br>4 atom(s) in parameter list<br>0 molecular, 1 polymeric unit(s)<br>63 created atom(s)<br>&nbsp;= 9*P+5 40*S-2 14*Na+1<br>80 created bond(s) (0 contacts,<br>0 H-bonds)<br>0 created molecule(s) (0 frag.)<br>12 cell edges<br>1 polyhedra (4 faces)<br>0 atom, 0 bond label(s)</div>
<div class="fr" style="left:257px;top:324px;height:92px"></div>
<svg class="a" style="left:262px;top:346px" width="96" height="48" viewBox="0 0 96 48"><rect width="96" height="48" fill="#000"/><line x1="5.5" y1="1" x2="5.5" y2="6" stroke="#a0a0a0" stroke-width="0.4" stroke-dasharray="1 1"/><line x1="5.5" y1="6" x2="9" y2="6" stroke="#a0a0a0" stroke-width="0.4" stroke-dasharray="1 1"/><line x1="28.50" y1="6.5" x2="28.50" y2="42.5" stroke="#a89070" stroke-width="0.5"/><line x1="28.5" y1="6.50" x2="67.5" y2="6.50" stroke="#a89070" stroke-width="0.5"/><line x1="33.38" y1="6.5" x2="33.38" y2="42.5" stroke="#a89070" stroke-width="0.5"/><line x1="28.5" y1="11.00" x2="67.5" y2="11.00" stroke="#a89070" stroke-width="0.5"/><line x1="38.25" y1="6.5" x2="38.25" y2="42.5" stroke="#a89070" stroke-width="0.5"/><line x1="28.5" y1="15.50" x2="67.5" y2="15.50" stroke="#a89070" stroke-width="0.5"/><line x1="43.12" y1="6.5" x2="43.12" y2="42.5" stroke="#a89070" stroke-width="0.5"/><line x1="28.5" y1="20.00" x2="67.5" y2="20.00" stroke="#a89070" stroke-width="0.5"/><line x1="48.00" y1="6.5" x2="48.00" y2="42.5" stroke="#a89070" stroke-width="0.5"/><line x1="28.5" y1="24.50" x2="67.5" y2="24.50" stroke="#a89070" stroke-width="0.5"/><line x1="52.88" y1="6.5" x2="52.88" y2="42.5" stroke="#a89070" stroke-width="0.5"/><line x1="28.5" y1="29.00" x2="67.5" y2="29.00" stroke="#a89070" stroke-width="0.5"/><line x1="57.75" y1="6.5" x2="57.75" y2="42.5" stroke="#a89070" stroke-width="0.5"/><line x1="28.5" y1="33.50" x2="67.5" y2="33.50" stroke="#a89070" stroke-width="0.5"/><line x1="62.62" y1="6.5" x2="62.62" y2="42.5" stroke="#a89070" stroke-width="0.5"/><line x1="28.5" y1="38.00" x2="67.5" y2="38.00" stroke="#a89070" stroke-width="0.5"/><line x1="67.50" y1="6.5" x2="67.50" y2="42.5" stroke="#a89070" stroke-width="0.5"/><line x1="28.5" y1="42.50" x2="67.5" y2="42.50" stroke="#a89070" stroke-width="0.5"/><circle cx="31.79" cy="9.67" r="1.6" fill="#f0e818"/><circle cx="31.79" cy="21.33" r="1.6" fill="#f0e818"/><circle cx="34.38" cy="12.00" r="1.6" fill="#f0e818"/><circle cx="34.38" cy="19.00" r="1.6" fill="#f0e818"/><circle cx="36.96" cy="14.33" r="1.6" fill="#f0e818"/><circle cx="36.96" cy="16.67" r="1.6" fill="#f0e818"/><circle cx="39.54" cy="16.67" r="1.6" fill="#f0e818"/><circle cx="39.54" cy="14.33" r="1.6" fill="#f0e818"/><circle cx="42.12" cy="19.00" r="1.6" fill="#f0e818"/><circle cx="42.12" cy="12.00" r="1.6" fill="#f0e818"/><circle cx="44.71" cy="21.33" r="1.6" fill="#f0e818"/><circle cx="44.71" cy="9.67" r="1.6" fill="#f0e818"/><circle cx="31.43" cy="14.60" r="1.4" fill="#e8e020"/><circle cx="37.27" cy="9.20" r="1.4" fill="#e8e020"/><circle cx="45.08" cy="16.40" r="1.4" fill="#e8e020"/><circle cx="39.23" cy="21.80" r="1.4" fill="#e8e020"/><circle cx="31.79" cy="27.67" r="1.6" fill="#f0e818"/><circle cx="31.79" cy="39.33" r="1.6" fill="#f0e818"/><circle cx="34.38" cy="30.00" r="1.6" fill="#f0e818"/><circle cx="34.38" cy="37.00" r="1.6" fill="#f0e818"/><circle cx="36.96" cy="32.33" r="1.6" fill="#f0e818"/><circle cx="36.96" cy="34.67" r="1.6" fill="#f0e818"/><circle cx="39.54" cy="34.67" r="1.6" fill="#f0e818"/><circle cx="39.54" cy="32.33" r="1.6" fill="#f0e818"/><circle cx="42.12" cy="37.00" r="1.6" fill="#f0e818"/><circle cx="42.12" cy="30.00" r="1.6" fill="#f0e818"/><circle cx="44.71" cy="39.33" r="1.6" fill="#f0e818"/><circle cx="44.71" cy="27.67" r="1.6" fill="#f0e818"/><circle cx="31.43" cy="32.60" r="1.4" fill="#e8e020"/><circle cx="37.27" cy="27.20" r="1.4" fill="#e8e020"/><circle cx="45.08" cy="34.40" r="1.4" fill="#e8e020"/><circle cx="39.23" cy="39.80" r="1.4" fill="#e8e020"/><circle cx="51.29" cy="9.67" r="1.6" fill="#f0e818"/><circle cx="51.29" cy="21.33" r="1.6" fill="#f0e818"/><circle cx="53.88" cy="12.00" r="1.6" fill="#f0e818"/><circle cx="53.88" cy="19.00" r="1.6" fill="#f0e818"/><circle cx="56.46" cy="14.33" r="1.6" fill="#f0e818"/><circle cx="56.46" cy="16.67" r="1.6" fill="#f0e818"/><circle cx="59.04" cy="16.67" r="1.6" fill="#f0e818"/><circle cx="59.04" cy="14.33" r="1.6" fill="#f0e818"/><circle cx="61.62" cy="19.00" r="1.6" fill="#f0e818"/><circle cx="61.62" cy="12.00" r="1.6" fill="#f0e818"/><circle cx="64.21" cy="21.33" r="1.6" fill="#f0e818"/><circle cx="64.21" cy="9.67" r="1.6" fill="#f0e818"/><circle cx="50.92" cy="14.60" r="1.4" fill="#e8e020"/><circle cx="56.77" cy="9.20" r="1.4" fill="#e8e020"/><circle cx="64.58" cy="16.40" r="1.4" fill="#e8e020"/><circle cx="58.73" cy="21.80" r="1.4" fill="#e8e020"/><circle cx="51.29" cy="27.67" r="1.6" fill="#f0e818"/><circle cx="51.29" cy="39.33" r="1.6" fill="#f0e818"/><circle cx="53.88" cy="30.00" r="1.6" fill="#f0e818"/><circle cx="53.88" cy="37.00" r="1.6" fill="#f0e818"/><circle cx="56.46" cy="32.33" r="1.6" fill="#f0e818"/><circle cx="56.46" cy="34.67" r="1.6" fill="#f0e818"/><circle cx="59.04" cy="34.67" r="1.6" fill="#f0e818"/><circle cx="59.04" cy="32.33" r="1.6" fill="#f0e818"/><circle cx="61.62" cy="37.00" r="1.6" fill="#f0e818"/><circle cx="61.62" cy="30.00" r="1.6" fill="#f0e818"/><circle cx="64.21" cy="39.33" r="1.6" fill="#f0e818"/><circle cx="64.21" cy="27.67" r="1.6" fill="#f0e818"/><circle cx="50.92" cy="32.60" r="1.4" fill="#e8e020"/><circle cx="56.77" cy="27.20" r="1.4" fill="#e8e020"/><circle cx="64.58" cy="34.40" r="1.4" fill="#e8e020"/><circle cx="58.73" cy="39.80" r="1.4" fill="#e8e020"/><rect x="28.5" y="6.5" width="39.0" height="36.0" fill="none" stroke="#e0d0d8" stroke-width="0.6"/><line x1="48.0" y1="6.5" x2="48.0" y2="42.5" stroke="#e0d0d8" stroke-width="0.5"/><line x1="28.5" y1="24.5" x2="67.5" y2="24.5" stroke="#e0d0d8" stroke-width="0.5"/><path d="M28.5 6.5L30.0 5.0H69.0V41.0L67.5 42.5M67.5 6.5L69.0 5.0" fill="none" stroke="#e0d0d8" stroke-width="0.5"/><rect x="90.5" y="39" width="2" height="6" fill="#e0d040"/><rect x="90.5" y="38" width="2" height="1.5" fill="#d040d0"/></svg>
<div class="ct" style="left:368px;top:324.3px"><b>Picture 10</b><br>4 atom(s) in parameter list<br>0 molecular, 1 polymeric unit(s)<br>177 created atom(s)<br>&nbsp;= 35*P+5 64*S-2 78*Na+1<br>304 created bond(s) (0<br>contacts, 0 H-bonds)<br>0 created molecule(s) (0 frag.)<br>54 cell edges<br>0 polyhedra (0 faces)<br>0 atom, 0 bond label(s)</div>
<div id="tip"><span>Collapse pictures view to</span></div>
<div id="btrow"></div>
<div id="status"><span style="left:2.8px;letter-spacing:-0.3px">For Help, press F1</span>
<div class="d" style="left:450.5px"></div><div class="d" style="left:518px"></div><div class="d" style="left:536px"></div><div class="d" style="left:554px"></div>
<span style="left:558.5px">Blar</span><div class="d" style="left:573px"></div>
<div style="position:absolute;left:575px;top:1px;width:66px;height:12px;background:#c9d1dc;border:1px solid #e6eaf0"></div>
<span style="left:577px;color:#2b3a52">Manual</span>
<span style="left:645.5px">N. 0.95834 &#162;</span><div class="d" style="left:687.5px"></div>
<span style="left:690.5px">BMP</span><div class="d" style="left:715.5px"></div>
<span style="left:719px">4 parms</span><div class="d" style="left:762.5px"></div>
<span style="left:765.5px">177 atoms</span><div class="d" style="left:809px"></div>
<span style="left:812.5px">304 bonds</span><div class="d" style="left:856.5px"></div>
<span style="left:859.5px">polymeric</span><div class="d" style="left:898.5px"></div>
<span style="left:901.5px">1 polyh.</span>
<div style="position:absolute;left:940px;top:5px;width:9px;height:9px;background:radial-gradient(circle,#e0e6ee 0.7px,transparent 0.8px) 0 0/2.5px 2.5px;clip-path:polygon(100% 0,100% 100%,0 100%)"></div>
</div>
<svg class="a" style="left:10px;top:39px;overflow:visible" width="2" height="11" viewBox="0 0 2 11"><rect x="0" y="0" width="1.5" height="1.5" fill="#6a7890"/><rect x="0" y="3" width="1.5" height="1.5" fill="#6a7890"/><rect x="0" y="6" width="1.5" height="1.5" fill="#6a7890"/><rect x="0" y="9" width="1.5" height="1.5" fill="#6a7890"/></svg>
<svg class="a" style="left:9.5px;top:22px;overflow:visible" width="2" height="11" viewBox="0 0 2 11"><rect x="0" y="0" width="1.5" height="1.5" fill="#6a7890"/><rect x="0" y="3" width="1.5" height="1.5" fill="#6a7890"/><rect x="0" y="6" width="1.5" height="1.5" fill="#6a7890"/><rect x="0" y="9" width="1.5" height="1.5" fill="#6a7890"/></svg>
<svg class="a" style="left:13px;top:21.5px;overflow:visible" width="10" height="10" viewBox="0 0 10 10"><rect x="1" y="0.5" width="7" height="9" fill="#f4e870" stroke="#7a7a30" stroke-width="0.7"/><path d="M3 4H8L6 2M8 4L6 6" stroke="#208020" stroke-width="1.3" fill="none"/><path d="M3 7H9" stroke="#30a030" stroke-width="1.3"/></svg>
<svg class="a" style="left:14px;top:38px;overflow:visible" width="10" height="11" viewBox="0 0 10 11"><path d="M2 1.5H7L9 3.5V10H2Z" fill="#fafafa" stroke="#8a8a8a" stroke-width="0.7"/><circle cx="2.5" cy="2" r="2" fill="#f8e040"/></svg>
<svg class="a" style="left:28px;top:38px;overflow:visible" width="11" height="11" viewBox="0 0 11 11"><path d="M0.5 3H4L5 4H9.5V9.5H0.5Z" fill="#e8b840" stroke="#a07820" stroke-width="0.6"/><path d="M1.5 5.5H10.5L9.5 9.5H0.5Z" fill="#f8d870"/><path d="M7 2L9.5 1" stroke="#4a8ad0" stroke-width="0.8"/></svg>
<svg class="a" style="left:43px;top:38px;overflow:visible" width="11" height="11" viewBox="0 0 11 11"><rect x="0.5" y="0.5" width="9.5" height="9.5" fill="#4a50b8" stroke="#303080" stroke-width="0.5"/><rect x="2.5" y="0.8" width="5" height="3.5" fill="#e8ecf8"/><rect x="3" y="6.5" width="4" height="3.5" fill="#20206a"/></svg>
<svg class="a" style="left:57.5px;top:38px;overflow:visible" width="11" height="11" viewBox="0 0 11 11"><rect x="0.5" y="2" width="4" height="8" rx="1" fill="#2a4aa0"/><rect x="6" y="2" width="4" height="8" rx="1" fill="#2a4aa0"/><rect x="1.3" y="4" width="2.4" height="2" fill="#c0d8f8"/><rect x="6.8" y="4" width="2.4" height="2" fill="#c0d8f8"/><rect x="3" y="5" width="4" height="2" fill="#203a80"/></svg>
<svg class="a" style="left:72.5px;top:38px;overflow:visible" width="11" height="11" viewBox="0 0 11 11"><path d="M1 0.5H7L9 2.5V10H1Z" fill="#fafafa" stroke="#909090" stroke-width="0.6"/><circle cx="5" cy="5.5" r="2.5" fill="#d8e0e8" stroke="#606060" stroke-width="0.8"/><path d="M7 7.5L10 10" stroke="#d08020" stroke-width="1.2"/></svg>
<svg class="a" style="left:86.5px;top:38px;overflow:visible" width="11" height="11" viewBox="0 0 11 11"><rect x="2.5" y="0.5" width="6" height="4" fill="#fafafa" stroke="#909090" stroke-width="0.5"/><path d="M0.5 4.5H10.5V9H0.5Z" fill="#c8ccd4" stroke="#707880" stroke-width="0.6"/><rect x="5.5" y="6" width="4" height="2" fill="#40a040"/></svg>
<div class="sep" style="left:100px;top:37.5px;height:12px"></div>
<svg class="a" style="left:106px;top:38px;overflow:visible" width="8" height="11" viewBox="0 0 8 11"><path d="M2 1L5.5 7M6 1L2.5 7" stroke="#8090a8" stroke-width="1"/><circle cx="2.5" cy="8.5" r="1.6" fill="none" stroke="#2a50c0" stroke-width="1"/><circle cx="5.5" cy="8.5" r="1.6" fill="none" stroke="#2a50c0" stroke-width="1"/></svg>
<svg class="a" style="left:119.5px;top:38px;overflow:visible" width="11" height="11" viewBox="0 0 11 11"><rect x="0.5" y="0.5" width="5.5" height="7" fill="#f4f6fa" stroke="#4a70c0" stroke-width="0.7"/><rect x="4.5" y="3" width="5.5" height="7" fill="#e8f0fc" stroke="#3a60b0" stroke-width="0.7"/></svg>
<svg class="a" style="left:134.5px;top:38px;overflow:visible" width="11" height="11" viewBox="0 0 11 11"><rect x="0.5" y="1.5" width="8" height="8.5" fill="#d4d8de" stroke="#b4b8c0" stroke-width="0.6"/><rect x="4" y="4" width="6.5" height="6.5" fill="#e4e6ea" stroke="#b8bcc4" stroke-width="0.6"/></svg>
<div class="sep" style="left:148px;top:37.5px;height:12px"></div>
<svg class="a" style="left:153.5px;top:38px;overflow:visible" width="9" height="11" viewBox="0 0 9 11"><path d="M2 3.5C6 1 9 4 6.5 7L5 9" stroke="#9aa0aa" stroke-width="1.3" fill="none"/><path d="M0.5 1.5L2.5 5L4.5 2.5Z" fill="#9aa0aa"/></svg>
<svg class="a" style="left:166px;top:42px;overflow:visible" width="5" height="3" viewBox="0 0 5 3"><path d="M0 0H5L2.5 3Z" fill="#8a909a"/></svg>
<svg class="a" style="left:175px;top:38px;overflow:visible" width="9" height="11" viewBox="0 0 9 11"><path d="M7 3.5C3 1 0 4 2.5 7L4 9" stroke="#9aa0aa" stroke-width="1.3" fill="none"/><path d="M8.5 1.5L6.5 5L4.5 2.5Z" fill="#9aa0aa"/></svg>
<svg class="a" style="left:187.5px;top:42px;overflow:visible" width="5" height="3" viewBox="0 0 5 3"><path d="M0 0H5L2.5 3Z" fill="#8a909a"/></svg>
<div class="sep" style="left:195.5px;top:37.5px;height:12px"></div>
<svg class="a" style="left:200.5px;top:38px;overflow:visible" width="10" height="11" viewBox="0 0 10 11"><path d="M1.5 5V3M3.5 5V1.5M5.5 5V1.5M7.5 5V2.5M1.5 5C1 8 3 10 5 10S9 8 8.5 4" stroke="#a8acb4" stroke-width="1.1" fill="none"/></svg>
<svg class="a" style="left:215px;top:38px;overflow:visible" width="7" height="11" viewBox="0 0 7 11"><path d="M1 1V9L3 7L5 10L6 9.5L4.5 6.5H7Z" fill="#d8dce2" stroke="#a8acb4" stroke-width="0.6"/></svg>
<svg class="a" style="left:227.5px;top:42px;overflow:visible" width="5" height="3" viewBox="0 0 5 3"><path d="M0 0H5L2.5 3Z" fill="#333"/></svg>
<div class="sep" style="left:235.5px;top:37.5px;height:12px"></div>
<svg class="a" style="left:240px;top:38px;overflow:visible" width="11" height="11" viewBox="0 0 11 11"><rect x="0.5" y="0.5" width="10.5" height="9.5" fill="#f4f6fa" stroke="#4a6090" stroke-width="0.8"/><rect x="0.5" y="0.5" width="10.5" height="2.2" fill="#3a6cc0"/><rect x="3" y="4.5" width="5" height="4" fill="#e8d8a0" stroke="#807040" stroke-width="0.5"/></svg>
<svg class="a" style="left:254.5px;top:38px;overflow:visible" width="11" height="11" viewBox="0 0 11 11"><rect x="0.5" y="0.5" width="10.5" height="9.5" fill="#f4f6fa" stroke="#4a6090" stroke-width="0.8"/><rect x="0.5" y="0.5" width="10.5" height="2.2" fill="#3a6cc0"/><path d="M2 6L4 8L8 4" stroke="#30a030" stroke-width="1.4" fill="none"/></svg>
<svg class="a" style="left:269px;top:38px;overflow:visible" width="11" height="11" viewBox="0 0 11 11"><rect x="0.5" y="0.5" width="10.5" height="9.5" fill="#f4f6fa" stroke="#4a6090" stroke-width="0.8"/><rect x="0.5" y="0.5" width="10.5" height="2.2" fill="#3a6cc0"/><path d="M3 7C3 4 7 4 7 6.5" stroke="#3a70d0" stroke-width="1.3" fill="none"/><path d="M5.5 8.5L8 6L9 9Z" fill="#3a70d0"/></svg>
<svg class="a" style="left:283.5px;top:38px;overflow:visible" width="11" height="11" viewBox="0 0 11 11"><rect x="0.5" y="0.5" width="10.5" height="9.5" fill="#f4f6fa" stroke="#4a6090" stroke-width="0.8"/><rect x="0.5" y="0.5" width="10.5" height="2.2" fill="#3a6cc0"/><path d="M4 9.5L10.5 4" stroke="#d0d8e4" stroke-width="1"/></svg>
<div class="sep" style="left:298px;top:37.5px;height:12px"></div>
<svg class="a" style="left:302px;top:38px;overflow:visible" width="11" height="11" viewBox="0 0 11 11"><rect x="0.5" y="0.5" width="10.5" height="9.5" fill="#f4f6fa" stroke="#4a6090" stroke-width="0.8"/><rect x="0.5" y="0.5" width="10.5" height="2.2" fill="#3a6cc0"/><rect x="4" y="5" width="6.5" height="5.5" fill="#f0c020" stroke="#a08010" stroke-width="0.5"/><path d="M4 7H10.5M4 9H10.5M6 5V10.5M8.2 5V10.5" stroke="#c09010" stroke-width="0.4"/></svg>
<svg class="a" style="left:317px;top:38px;overflow:visible" width="11" height="11" viewBox="0 0 11 11"><rect x="0.5" y="0.5" width="9" height="9" fill="#dde0e6" stroke="#b8bcc4" stroke-width="0.6"/><path d="M2 3H8M2 5H8M2 7H8" stroke="#c4c8d0" stroke-width="0.6"/></svg>
<svg class="a" style="left:331px;top:38px;overflow:visible" width="11" height="11" viewBox="0 0 11 11"><rect x="0.5" y="1" width="9.5" height="8" fill="#e4e6ea" stroke="#b4b8c0" stroke-width="0.6"/><path d="M2 4H8M2 6H6" stroke="#c0c4cc" stroke-width="0.8"/></svg>
<svg class="a" style="left:345.5px;top:38px;overflow:visible" width="11" height="11" viewBox="0 0 11 11"><rect x="0.5" y="1" width="9.5" height="8" fill="#e4e6ea" stroke="#b4b8c0" stroke-width="0.6"/><path d="M2 4H8M2 6H6" stroke="#c0c4cc" stroke-width="0.8"/></svg>
<div class="sep" style="left:359.5px;top:37.5px;height:12px"></div>
<svg class="a" style="left:364px;top:38px;overflow:visible" width="5" height="11" viewBox="0 0 5 11"><rect x="0.5" y="0.5" width="3" height="2.5" fill="#303030"/><rect x="0.5" y="4" width="3" height="2.5" fill="#303030"/><rect x="0.5" y="7.5" width="3" height="2.5" fill="#303030"/></svg>
<svg class="a" style="left:369.5px;top:38px;overflow:visible" width="4" height="11" viewBox="0 0 4 11"><rect x="0.5" y="1" width="3" height="9" fill="#d8dce4"/></svg>
<svg class="a" style="left:377.5px;top:42px;overflow:visible" width="5" height="3" viewBox="0 0 5 3"><path d="M0 0H5L2.5 3Z" fill="#222"/></svg>
<svg class="a" style="left:386px;top:38px;overflow:visible" width="11" height="11" viewBox="0 0 11 11"><path d="M0.5 2H4L5 3H10.5V10H0.5Z" fill="#6a6e76" stroke="#4a4e56" stroke-width="0.5"/><rect x="1" y="4.5" width="9" height="5" fill="#5a5e66"/></svg>
<svg class="a" style="left:400px;top:38px;overflow:visible" width="11" height="11" viewBox="0 0 11 11"><rect x="1.5" y="2.5" width="9" height="8" fill="#f4f8fc" stroke="#3a5a90" stroke-width="0.8"/><rect x="1.5" y="2.5" width="9" height="1.5" fill="#4070c0"/><circle cx="2" cy="2" r="2.2" fill="#f8e040"/></svg>
<svg class="a" style="left:415px;top:38px;overflow:visible" width="11" height="11" viewBox="0 0 11 11"><rect x="0.5" y="1" width="6" height="5" fill="#f0f4f8" stroke="#6a80a8" stroke-width="0.6"/><rect x="3.5" y="4" width="7" height="6" fill="#3a5a90"/><rect x="4.5" y="5.5" width="5" height="4" fill="#e0a030"/></svg>
<svg class="a" style="left:429px;top:38px;overflow:visible" width="11" height="11" viewBox="0 0 11 11"><path d="M0.5 1L2 0L3.5 1L5 0L6.5 1L8 0L9.5 1V4H0.5Z" fill="#f0c820"/><rect x="3.5" y="4" width="7" height="6" fill="#3a5a90"/><rect x="4.5" y="5.5" width="5" height="4" fill="#e0a030"/></svg>
<svg class="a" style="left:444.5px;top:38px;overflow:visible" width="10" height="11" viewBox="0 0 10 11"><rect x="0.5" y="1" width="9" height="9" fill="#e0e2e6" stroke="#b8bcc4" stroke-width="0.6"/><rect x="3" y="5" width="4" height="3.5" fill="#b0b4bc"/><path d="M3.5 5V3.5A1.5 1.5 0 0 1 6.5 3.5V5" stroke="#a0a4ac" fill="none" stroke-width="0.8"/></svg>
<svg class="a" style="left:458px;top:38px;overflow:visible" width="10" height="11" viewBox="0 0 10 11"><ellipse cx="5.5" cy="6" rx="4" ry="3.5" fill="#e8ecf0" stroke="#a8b0b8" stroke-width="0.7"/><path d="M1 3L3 6L5.5 1.5" stroke="#30b030" stroke-width="1.3" fill="none"/></svg>
<svg class="a" style="left:472px;top:42px;overflow:visible" width="5" height="3" viewBox="0 0 5 3"><path d="M0 0H5L2.5 3Z" fill="#222"/></svg>
<svg class="a" style="left:480.5px;top:38px;overflow:visible" width="11" height="11" viewBox="0 0 11 11"><rect x="3" y="0.5" width="7.5" height="6.5" fill="#f8f0d0" stroke="#4a6aa0" stroke-width="0.7"/><path d="M4 5L6 3L8.5 5.5" stroke="#c08020" stroke-width="1" fill="none"/><path d="M0.5 8.5H6M0.5 8.5L2.5 7M0.5 8.5L2.5 10" stroke="#3a80d8" stroke-width="1.2" fill="none"/></svg>
<svg class="a" style="left:494.5px;top:38px;overflow:visible" width="11" height="11" viewBox="0 0 11 11"><rect x="0.5" y="0.5" width="7.5" height="6.5" fill="#f8f0d0" stroke="#4a6aa0" stroke-width="0.7"/><path d="M1.5 5L3.5 3L6 5.5" stroke="#c08020" stroke-width="1" fill="none"/><path d="M4 8.5H10.5M10.5 8.5L8.5 7M10.5 8.5L8.5 10" stroke="#3a80d8" stroke-width="1.2" fill="none"/></svg>
<svg class="a" style="left:508.5px;top:42px;overflow:visible" width="5" height="3" viewBox="0 0 5 3"><path d="M0 0H5L2.5 3Z" fill="#222"/></svg>
<div class="sep" style="left:516px;top:37.5px;height:12px"></div>
<svg class="a" style="left:520.5px;top:38px;overflow:visible" width="11" height="11" viewBox="0 0 11 11"><rect x="0.5" y="0.5" width="9.5" height="9.5" fill="#f8f8fa" stroke="#6a7890" stroke-width="0.7"/><path d="M2 3H8.5M2 5H8.5M2 7H8.5" stroke="#b0b8c4" stroke-width="0.7"/></svg>
<svg class="a" style="left:534.5px;top:38px;overflow:visible" width="11" height="11" viewBox="0 0 11 11"><rect x="0.5" y="0.5" width="9.5" height="9.5" fill="#f8f8fa" stroke="#6a7890" stroke-width="0.7"/><path d="M3 1.5L4.5 4H1.5Z" fill="#d02020"/><path d="M3 9L4.5 6.5H1.5Z" fill="#2040c0"/><path d="M6 3H9M6 5H9M6 7H9" stroke="#a0a8b4" stroke-width="0.6"/></svg>
<svg class="a" style="left:549px;top:38px;overflow:visible" width="11" height="11" viewBox="0 0 11 11"><rect x="0.5" y="0.5" width="9.5" height="9.5" fill="#f8f8fa" stroke="#6a7890" stroke-width="0.7"/><path d="M0.5 3.5H10M0.5 6.5H10M3.5 0.5V10M6.5 0.5V10" stroke="#a0a8b4" stroke-width="0.5"/></svg>
<svg class="a" style="left:563px;top:42px;overflow:visible" width="5" height="3" viewBox="0 0 5 3"><path d="M0 0H5L2.5 3Z" fill="#222"/></svg>
<svg class="a" style="left:571px;top:38px;overflow:visible" width="11" height="11" viewBox="0 0 11 11"><rect x="0.5" y="0.5" width="9.5" height="9.5" fill="#f8f8fa" stroke="#6a7890" stroke-width="0.7"/><path d="M2 8.5L5 2.5L8 8.5Z" fill="none" stroke="#303030" stroke-width="0.8"/></svg>
<svg class="a" style="left:585.5px;top:38px;overflow:visible" width="11" height="11" viewBox="0 0 11 11"><rect x="0.5" y="0.5" width="9.5" height="9.5" fill="#f8f8fa" stroke="#6a7890" stroke-width="0.7"/><path d="M1.5 8.5H9M2.5 8V5M4 8V2.5M5.5 8V5.5M7 8V3.5" stroke="#2a50c0" stroke-width="0.8"/></svg>
<svg class="a" style="left:600px;top:38px;overflow:visible" width="11" height="11" viewBox="0 0 11 11"><rect x="0.5" y="0.5" width="9.5" height="9.5" fill="#f8f4e0" stroke="#6a7890" stroke-width="0.7"/><rect x="5.5" y="2" width="3.5" height="7" fill="#e8c040"/><path d="M1.5 3H9M1.5 5H9M1.5 7H9" stroke="#a08040" stroke-width="0.5"/></svg>
<div class="sep" style="left:614.5px;top:37.5px;height:12px"></div>
<svg class="a" style="left:619px;top:38px;overflow:visible" width="11" height="11" viewBox="0 0 11 11"><rect x="0.5" y="4" width="8" height="6.5" fill="#f8e8a0" stroke="#a09060" stroke-width="0.6"/><path d="M3 3L9.5 9.5" stroke="#202020" stroke-width="1.6"/><path d="M2 1L4 3" stroke="#f0d020" stroke-width="1.5"/></svg>
<div class="sep" style="left:632.5px;top:37.5px;height:12px"></div>
<span class="a" style="left:638.5px;top:37px;font-size:10px;font-weight:bold;color:#1a30c8">P</span>
<svg class="a" style="left:652.5px;top:38px;overflow:visible" width="9" height="11" viewBox="0 0 9 11"><circle cx="4.5" cy="6" r="3" fill="none" stroke="#8a9098" stroke-width="1.1"/><circle cx="4.5" cy="6" r="1" fill="#8a9098"/></svg>
<svg class="a" style="left:666px;top:38px;overflow:visible" width="11" height="11" viewBox="0 0 11 11"><path d="M1 1V6M4 1V6M1 3.5H7" stroke="#303840" stroke-width="1.4"/><path d="M6 5L10 9" stroke="#606870" stroke-width="1.4"/><circle cx="8" cy="8" r="2" fill="#707880"/></svg>
<div class="a" style="left:680px;top:35px;width:7px;height:16px;background:linear-gradient(180deg,#e4e8ef,#d4d9e2)"></div>
<svg class="a" style="left:681.5px;top:45.5px;overflow:visible" width="5" height="5" viewBox="0 0 5 5"><path d="M0.5 0.5H4.5" stroke="#222" stroke-width="0.8"/><path d="M0.5 2H4.5L2.5 4.5Z" fill="#222"/></svg>
<svg class="a" style="left:923.5px;top:21.5px;overflow:visible" width="33" height="10" viewBox="0 0 33 10"><path d="M3.5 7.5H7.5" stroke="#222" stroke-width="1.2"/><rect x="14" y="4.5" width="4.5" height="3.5" fill="none" stroke="#222" stroke-width="0.9"/><path d="M16 4V2H20.5V5.5H18.8" stroke="#222" stroke-width="0.9" fill="none"/><path d="M25 2L29 7M29 2L25 7" stroke="#222" stroke-width="1.3"/></svg>
<svg class="a" style="left:5px;top:4.5px;overflow:visible" width="11" height="9" viewBox="0 0 11 9"><path d="M0.5 2L3 0.5H8L10.5 2L5.5 8.5Z" fill="#8aa8e8"/><path d="M2.5 2L5.5 8.5L4 2Z M6 2L5.5 8.5L8.5 2Z" fill="#3a58c8"/></svg>
<div class="a" style="left:897px;top:0;width:61px;height:11.5px;border:1px solid #4a5868;border-top:none;border-radius:0 0 3px 3px;overflow:hidden;background:linear-gradient(180deg,#e2eaf2 0,#c8d6e4 45%,#a4b8cc 55%,#b8cadc 100%)"><div class="a" style="left:16px;top:0;width:1px;height:11px;background:#5a6878"></div><div class="a" style="left:32px;top:0;width:28px;height:11px;border-left:1px solid #5a4a4a;background:linear-gradient(180deg,#e8b0a4 0,#d48a7a 45%,#c24a34 55%,#d07a66 100%)"></div></div>
<svg class="a" style="left:897px;top:0px;overflow:visible" width="61" height="11" viewBox="0 0 61 11"><rect x="5" y="5.8" width="7" height="2.2" rx="0.6" fill="#f8fafc" stroke="#3a4a5a" stroke-width="0.6"/><rect x="21.8" y="2.6" width="6.4" height="5.6" fill="none" stroke="#3a4a5a" stroke-width="2.4"/><rect x="21.8" y="2.6" width="6.4" height="5.6" fill="none" stroke="#f8fafc" stroke-width="1.3"/><path d="M43.5 2.5L49 8.2M49 2.5L43.5 8.2" stroke="#5a2a20" stroke-width="2.8"/><path d="M43.5 2.5L49 8.2M49 2.5L43.5 8.2" stroke="#fff" stroke-width="1.7"/></svg>
<svg class="a" style="left:24.5px;top:57.5px;overflow:visible" width="7" height="7" viewBox="0 0 7 7"><path d="M1 1L6 6M6 1L1 6" stroke="#555" stroke-width="1"/></svg>
<svg class="a" style="left:35px;top:57.5px;overflow:visible" width="7" height="7" viewBox="0 0 7 7"><path d="M1 1L5.5 5.5M5.5 2.5V5.5H2.5" stroke="#666" stroke-width="0.9" fill="none"/></svg>
<svg class="a" style="left:24px;top:76.5px;overflow:visible" width="7" height="6" viewBox="0 0 7 6"><rect x="0.3" y="0.3" width="6.4" height="5.4" fill="#3a3aa0"/><path d="M0.3 2.2H6.7M0.3 3.9H6.7M2.4 0.3V5.7M4.5 0.3V5.7" stroke="#d8d8f0" stroke-width="0.5"/></svg>
<div class="a" style="left:926px;top:74.5px;width:11px;height:10.5px;background:#fff;border:1px solid #9a9a9a"></div>
<svg class="a" style="left:927.5px;top:76.5px;overflow:visible" width="9" height="7" viewBox="0 0 9 7"><path d="M1 1L3.5 3.5L1 6M4.5 1L7 3.5L4.5 6" stroke="#1a3ad0" stroke-width="1.5" fill="none"/></svg>
<svg class="a" style="left:946px;top:76px;overflow:visible" width="7" height="7" viewBox="0 0 7 7"><path d="M1 1L6 6M6 1L1 6" stroke="#666" stroke-width="0.9"/></svg>
<svg class="a" style="left:946px;top:290px;overflow:visible" width="7" height="7" viewBox="0 0 7 7"><path d="M1 1L6 6M6 1L1 6" stroke="#666" stroke-width="0.9"/></svg>
<div class="tb" style="left:7px;top:470.5px;width:457px;height:16.5px"></div>
<div class="tb" style="left:466px;top:470.5px;width:159px;height:16.5px"></div>
<div class="tb" style="left:627px;top:470.5px;width:72px;height:16.5px"></div>
<svg class="a" style="left:9.5px;top:474px;overflow:visible" width="2" height="11" viewBox="0 0 2 11"><rect x="0" y="0" width="1.5" height="1.5" fill="#6a7890"/><rect x="0" y="3" width="1.5" height="1.5" fill="#6a7890"/><rect x="0" y="6" width="1.5" height="1.5" fill="#6a7890"/><rect x="0" y="9" width="1.5" height="1.5" fill="#6a7890"/></svg>
<svg class="a" style="left:469px;top:474px;overflow:visible" width="2" height="11" viewBox="0 0 2 11"><rect x="0" y="0" width="1.5" height="1.5" fill="#6a7890"/><rect x="0" y="3" width="1.5" height="1.5" fill="#6a7890"/><rect x="0" y="6" width="1.5" height="1.5" fill="#6a7890"/><rect x="0" y="9" width="1.5" height="1.5" fill="#6a7890"/></svg>
<svg class="a" style="left:629.5px;top:474px;overflow:visible" width="2" height="11" viewBox="0 0 2 11"><rect x="0" y="0" width="1.5" height="1.5" fill="#6a7890"/><rect x="0" y="3" width="1.5" height="1.5" fill="#6a7890"/><rect x="0" y="6" width="1.5" height="1.5" fill="#6a7890"/><rect x="0" y="9" width="1.5" height="1.5" fill="#6a7890"/></svg>
<svg class="a" style="left:14.5px;top:473.5px;overflow:visible" width="11" height="11" viewBox="0 0 11 11"><rect x="0.5" y="0.5" width="10" height="9.5" fill="#fbf4d8" stroke="#8aa0c8" stroke-width="0.8"/><rect x="0.5" y="0.5" width="10" height="2" fill="#5a88d0"/><circle cx="5.5" cy="6.2" r="2.6" fill="none" stroke="#e8c020" stroke-width="1.6"/></svg>
<svg class="a" style="left:28px;top:473.5px;overflow:visible" width="11" height="11" viewBox="0 0 11 11"><rect x="0.5" y="0.5" width="9" height="8" fill="#f0f2f6" stroke="#2a3a80" stroke-width="0.9"/><rect x="0.5" y="0.5" width="9" height="2" fill="#3050a0"/><path d="M4 8H9M9 8L7 6M9 8L7 10" stroke="#20a8c0" stroke-width="1.8" fill="none"/></svg>
<svg class="a" style="left:42.5px;top:473.5px;overflow:visible" width="11" height="11" viewBox="0 0 11 11"><path d="M5 3L10.5 9.5" stroke="#203060" stroke-width="1.6"/><circle cx="3" cy="7" r="2" fill="#e8d820"/><circle cx="4.5" cy="4" r="1.5" fill="#d8c820"/><circle cx="2" cy="3" r="1" fill="#d8c820"/><path d="M6.5 1.5L9.5 1" stroke="#203060" stroke-width="1"/></svg>
<svg class="a" style="left:57.5px;top:473.5px;overflow:visible" width="11" height="11" viewBox="0 0 11 11"><rect x="1.5" y="0.5" width="9" height="8" fill="#f0f2f6" stroke="#2a3a80" stroke-width="0.9"/><rect x="1.5" y="0.5" width="9" height="2" fill="#3050a0"/><path d="M0.5 10.5L6 5" stroke="#a02010" stroke-width="1.2"/><circle cx="6.5" cy="5" r="1.8" fill="#e8c020"/></svg>
<svg class="a" style="left:70.5px;top:478.5px;overflow:visible" width="5" height="3" viewBox="0 0 5 3"><path d="M0 0H5L2.5 3Z" fill="#333"/></svg>
<div class="sep" style="left:78.5px;top:473px;height:12px"></div>
<svg class="a" style="left:83.5px;top:473.5px;overflow:visible" width="11" height="11" viewBox="0 0 11 11"><path d="M1 6L5 1.5L10 6L6 10.5Z" fill="#f0e070" stroke="#202020" stroke-width="0.9"/><path d="M1 6L5 1.5L6.5 3L2.5 7.5Z" fill="#303030"/></svg>
<svg class="a" style="left:97.5px;top:473.5px;overflow:visible" width="11" height="11" viewBox="0 0 11 11"><circle cx="3" cy="3" r="2.5" fill="#f0e020" stroke="#404000" stroke-width="0.6"/><circle cx="8" cy="3" r="2.5" fill="#f0e020" stroke="#404000" stroke-width="0.6"/><circle cx="3" cy="8" r="2.5" fill="#f0e020" stroke="#404000" stroke-width="0.6"/><circle cx="8" cy="8" r="2.5" fill="#f0e020" stroke="#404000" stroke-width="0.6"/></svg>
<svg class="a" style="left:112px;top:473.5px;overflow:visible" width="11" height="11" viewBox="0 0 11 11"><path d="M0.5 5.5H4M2.2 3.5V7.5M4 5.5H6" stroke="#101010" stroke-width="1.2"/><circle cx="8" cy="5.5" r="2.6" fill="#f0e020" stroke="#303000" stroke-width="0.6"/></svg>
<svg class="a" style="left:126.5px;top:473.5px;overflow:visible" width="11" height="11" viewBox="0 0 11 11"><circle cx="2.5" cy="8.5" r="1.8" fill="none" stroke="#202020" stroke-width="0.8"/><circle cx="8.5" cy="8.5" r="1.8" fill="none" stroke="#202020" stroke-width="0.8"/><path d="M3.5 3C3.5 0.5 8 0.5 7.5 3C7 4.5 5.5 4.5 5.5 6.5" stroke="#202020" stroke-width="1" fill="none"/></svg>
<svg class="a" style="left:140.5px;top:473.5px;overflow:visible" width="11" height="11" viewBox="0 0 11 11"><rect x="2" y="2" width="7" height="7" fill="#b8c0f0" stroke="#2a3ac0" stroke-width="0.9"/><path d="M2 2L9 9M9 2L2 9" stroke="#2a3ac0" stroke-width="0.6"/><circle cx="2" cy="2" r="1.4" fill="#fff" stroke="#2a3ac0" stroke-width="0.6"/><circle cx="9" cy="2" r="1.4" fill="#fff" stroke="#2a3ac0" stroke-width="0.6"/><circle cx="2" cy="9" r="1.4" fill="#fff" stroke="#2a3ac0" stroke-width="0.6"/><circle cx="9" cy="9" r="1.4" fill="#fff" stroke="#2a3ac0" stroke-width="0.6"/></svg>
<svg class="a" style="left:156.5px;top:473.5px;overflow:visible" width="11" height="11" viewBox="0 0 11 11"><circle cx="2.5" cy="8.5" r="1.8" fill="none" stroke="#9aa0a8" stroke-width="0.8"/><circle cx="8.5" cy="8.5" r="1.8" fill="none" stroke="#9aa0a8" stroke-width="0.8"/><path d="M5.5 1V6M3 7L5.5 5L8 7" stroke="#9aa0a8" stroke-width="0.9" fill="none"/></svg>
<svg class="a" style="left:170.5px;top:473.5px;overflow:visible" width="11" height="11" viewBox="0 0 11 11"><circle cx="5" cy="5.5" r="4.3" fill="#e8ecf0" stroke="#a0a8b0" stroke-width="0.6"/><circle cx="5" cy="5.5" r="2.6" fill="#706810" stroke="#303000" stroke-width="0.5"/></svg>
<svg class="a" style="left:183.5px;top:478.5px;overflow:visible" width="5" height="3" viewBox="0 0 5 3"><path d="M0 0H5L2.5 3Z" fill="#333"/></svg>
<div class="sep" style="left:191.5px;top:473px;height:12px"></div>
<svg class="a" style="left:195.5px;top:473.5px;overflow:visible" width="11" height="11" viewBox="0 0 11 11"><path d="M3 1H8L10.5 5.5L8 10H3L0.5 5.5Z" fill="none" stroke="#1a30d8" stroke-width="1.2"/></svg>
<svg class="a" style="left:209.5px;top:473.5px;overflow:visible" width="11" height="11" viewBox="0 0 11 11"><path d="M3 1H8L10.5 5.5L8 10H3L0.5 5.5Z" fill="none" stroke="#f0e040" stroke-width="1.3"/><path d="M3 1L0.5 5.5L3 10H5" fill="none" stroke="#1a30d8" stroke-width="1.3"/></svg>
<svg class="a" style="left:224px;top:473.5px;overflow:visible" width="11" height="11" viewBox="0 0 11 11"><ellipse cx="5.5" cy="3" rx="4" ry="2.2" fill="#b8c4e0" stroke="#3a4a90" stroke-width="0.7"/><ellipse cx="5.5" cy="7.5" rx="4" ry="2.2" fill="#b8c4e0" stroke="#3a4a90" stroke-width="0.7"/><path d="M2 3L9 7.5M9 3L2 7.5" stroke="#3a4a90" stroke-width="0.6"/></svg>
<svg class="a" style="left:240px;top:473.5px;overflow:visible" width="11" height="11" viewBox="0 0 11 11"><rect x="0.5" y="0.5" width="10" height="10" fill="#b8c0f0"/><path d="M1 1L10 10M10 1L1 10M1 5.5L5.5 1L10 5.5L5.5 10Z" stroke="#101010" stroke-width="1.1" fill="none"/></svg>
<svg class="a" style="left:254px;top:473.5px;overflow:visible" width="11" height="11" viewBox="0 0 11 11"><rect x="0.5" y="0.5" width="10" height="10" fill="#f0b8b0"/><path d="M1 1L10 10M10 1L1 10M1 5.5L5.5 1L10 5.5L5.5 10Z" stroke="#101010" stroke-width="1.1" fill="none"/></svg>
<div class="sep" style="left:268.5px;top:473px;height:12px"></div>
<svg class="a" style="left:272.5px;top:473.5px;overflow:visible" width="11" height="11" viewBox="0 0 11 11"><path d="M2.5 8.5L8 3" stroke="#202040" stroke-width="1"/><circle cx="2.5" cy="8.5" r="2" fill="#b0d0f0" stroke="#304060" stroke-width="0.5"/><circle cx="8.5" cy="2.5" r="2.2" fill="#f0e020" stroke="#404000" stroke-width="0.5"/></svg>
<svg class="a" style="left:286.5px;top:473.5px;overflow:visible" width="11" height="11" viewBox="0 0 11 11"><path d="M3 2H8L10 5.5L8 9H3L1 5.5Z" fill="none" stroke="#1a2a90" stroke-width="1"/><path d="M1 1L3 2M10 1L8 2M1 10L3 9M10 10L8 9" stroke="#e8d830" stroke-width="1.2"/></svg>
<svg class="a" style="left:301.5px;top:473.5px;overflow:visible" width="11" height="11" viewBox="0 0 11 11"><ellipse cx="6" cy="3.5" rx="4" ry="2.5" fill="none" stroke="#e8d830" stroke-width="1.1"/><ellipse cx="4.5" cy="7.5" rx="4" ry="2.5" fill="none" stroke="#303030" stroke-width="1"/></svg>
<svg class="a" style="left:316px;top:473.5px;overflow:visible" width="11" height="11" viewBox="0 0 11 11"><ellipse cx="6" cy="3.5" rx="4" ry="2.5" fill="none" stroke="#9aa0a8" stroke-width="0.9"/><ellipse cx="4.5" cy="7.5" rx="4" ry="2.5" fill="none" stroke="#9aa0a8" stroke-width="0.9"/></svg>
<div class="sep" style="left:331px;top:473px;height:12px"></div>
<svg class="a" style="left:334.5px;top:473.5px;overflow:visible" width="11" height="11" viewBox="0 0 11 11"><rect x="0.5" y="2.5" width="8" height="8" fill="#c0c8f4" stroke="#1a2ac0" stroke-width="1"/><rect x="2.5" y="0.5" width="8" height="8" fill="none" stroke="#1a2ac0" stroke-width="1"/></svg>
<svg class="a" style="left:349px;top:473.5px;overflow:visible" width="11" height="11" viewBox="0 0 11 11"><path d="M5.5 0.5L10.5 5.5L5.5 10.5L0.5 5.5Z M5.5 0.5V10.5M0.5 5.5H10.5" fill="none" stroke="#8a9098" stroke-width="0.8"/></svg>
<svg class="a" style="left:363px;top:473.5px;overflow:visible" width="12" height="11" viewBox="0 0 12 11"><path d="M0.5 3L3 1L6 4L9 1L11.5 3L10 8L6 6L2 8Z" fill="#e03020" stroke="#a02010" stroke-width="0.6"/><path d="M2 4L5 7M10 4L7 7" stroke="#e8d820" stroke-width="0.8"/></svg>
<svg class="a" style="left:377.5px;top:478.5px;overflow:visible" width="5" height="3" viewBox="0 0 5 3"><path d="M0 0H5L2.5 3Z" fill="#333"/></svg>
<svg class="a" style="left:384.5px;top:473.5px;overflow:visible" width="12" height="11" viewBox="0 0 12 11"><circle cx="2.5" cy="8" r="2" fill="none" stroke="#9aa0a8" stroke-width="0.8"/><path d="M3.5 6.5L5.5 4.5" stroke="#9aa0a8" stroke-width="0.8"/><text x="5" y="5" font-size="5" font-family="Liberation Sans" font-weight="bold" fill="#9aa0a8">Fe</text></svg>
<div class="sep" style="left:400.5px;top:473px;height:12px"></div>
<svg class="a" style="left:403.5px;top:473.5px;overflow:visible" width="11" height="11" viewBox="0 0 11 11"><rect x="0.5" y="0.5" width="10" height="10" fill="#a8b8f0" stroke="#4a60c0" stroke-width="0.7"/><path d="M5.5 1.5L8 4.5H3Z M5.5 9.5L8 6.5H3Z M1.5 5.5L4.5 3V8Z M9.5 5.5L6.5 3V8Z" fill="#101010"/><circle cx="5.5" cy="5.5" r="1.5" fill="#f0e020"/></svg>
<svg class="a" style="left:417.5px;top:478.5px;overflow:visible" width="5" height="3" viewBox="0 0 5 3"><path d="M0 0H5L2.5 3Z" fill="#333"/></svg>
<div class="sep" style="left:425.5px;top:473px;height:12px"></div>
<span class="a" style="left:429px;top:472px;font-size:10.5px;font-weight:bold;font-style:italic;font-family:'Liberation Serif',serif;color:#1a2ab0">M</span>
<svg class="a" style="left:444px;top:473.5px;overflow:visible" width="11" height="11" viewBox="0 0 11 11"><rect x="0.5" y="0.5" width="10" height="10" fill="#f0f0f4" stroke="#2a3a90" stroke-width="0.9"/><circle cx="6" cy="6" r="3" fill="#20a090"/><path d="M2 2L5 4" stroke="#d04040" stroke-width="1"/></svg>
<div class="a" style="left:457.5px;top:470.5px;width:6.5px;height:16.5px;background:linear-gradient(180deg,#e4e8ef,#d4d9e2)"></div>
<svg class="a" style="left:458.5px;top:480.5px;overflow:visible" width="5" height="5" viewBox="0 0 5 5"><path d="M0.5 0.5H4.5" stroke="#222" stroke-width="0.8"/><path d="M0.5 2H4.5L2.5 4.5Z" fill="#222"/></svg>
<div class="a" style="left:472px;top:471.5px;width:13.5px;height:14.5px;background:#fbe8b0;border:1px solid #f0d490"></div>
<svg class="a" style="left:474px;top:473.5px;overflow:visible" width="10" height="11" viewBox="0 0 10 11"><path d="M1.5 0.5V8.5L3.5 6.5L5.5 10L6.5 9.5L5 6H8Z" fill="#fff" stroke="#101010" stroke-width="0.8"/></svg>
<svg class="a" style="left:488.5px;top:473.5px;overflow:visible" width="11" height="11" viewBox="0 0 11 11"><path d="M5.5 0.5V10.5M0.5 5.5H10.5M2 5.5L5.5 2L9 5.5L5.5 9Z" stroke="#8a9098" stroke-width="0.9" fill="none"/></svg>
<svg class="a" style="left:503px;top:473.5px;overflow:visible" width="10" height="11" viewBox="0 0 10 11"><path d="M8 5.5A3.5 3.5 0 1 1 6 2.2" stroke="#101010" stroke-width="1.5" fill="none"/><path d="M5 0.5L8.5 2L6 4.5Z" fill="#101010"/></svg>
<svg class="a" style="left:517px;top:473.5px;overflow:visible" width="11" height="11" viewBox="0 0 11 11"><path d="M5.5 0.5V10.5M0.5 5.5H10.5" stroke="#101010" stroke-width="1.4"/><path d="M5.5 0L3.5 2.5H7.5Z M5.5 11L3.5 8.5H7.5Z M0 5.5L2.5 3.5V7.5Z M11 5.5L8.5 3.5V7.5Z" fill="#101010"/></svg>
<svg class="a" style="left:531.5px;top:473.5px;overflow:visible" width="10" height="11" viewBox="0 0 10 11"><path d="M0.5 3V0.5H3M7 0.5H9.5V3M9.5 7V9.5H7M3 9.5H0.5V7" stroke="#101010" stroke-width="1.1" fill="none"/><rect x="3" y="3" width="4" height="4" fill="none" stroke="#101010" stroke-width="1"/></svg>
<svg class="a" style="left:546px;top:473.5px;overflow:visible" width="10" height="11" viewBox="0 0 10 11"><path d="M9.5 1L0.5 5.5L9.5 9.5" stroke="#101010" stroke-width="1.3" fill="none"/><path d="M6 4V7" stroke="#101010" stroke-width="1"/></svg>
<svg class="a" style="left:560.5px;top:473.5px;overflow:visible" width="10" height="11" viewBox="0 0 10 11"><path d="M0.5 5L5 1L9.5 5M2 5.5V9.5H8V5.5M0.5 9.5H9.5" stroke="#101010" stroke-width="1.1" fill="none"/></svg>
<svg class="a" style="left:575px;top:473.5px;overflow:visible" width="10" height="11" viewBox="0 0 10 11"><circle cx="5" cy="5.5" r="3.2" fill="#202020"/><circle cx="4" cy="4.5" r="1" fill="#f0f0f0"/><path d="M0.5 3H2M8 3H9.5M0.5 8H2M8 8H9.5M5 0.5V2" stroke="#202020" stroke-width="0.9"/></svg>
<svg class="a" style="left:589px;top:473.5px;overflow:visible" width="11" height="11" viewBox="0 0 11 11"><circle cx="4" cy="4" r="3" fill="none" stroke="#9aa0a8" stroke-width="1"/><rect x="5" y="5" width="5.5" height="5.5" fill="#b8bcc4"/></svg>
<svg class="a" style="left:603.5px;top:473.5px;overflow:visible" width="11" height="11" viewBox="0 0 11 11"><circle cx="4" cy="4" r="3" fill="none" stroke="#8a9098" stroke-width="1"/><rect x="5" y="5" width="5.5" height="5.5" fill="#8a9098"/></svg>
<div class="a" style="left:618px;top:470.5px;width:7px;height:16.5px;background:linear-gradient(180deg,#e4e8ef,#d4d9e2)"></div>
<svg class="a" style="left:619.5px;top:480.5px;overflow:visible" width="5" height="5" viewBox="0 0 5 5"><path d="M0.5 0.5H4.5" stroke="#222" stroke-width="0.8"/><path d="M0.5 2H4.5L2.5 4.5Z" fill="#222"/></svg>
<svg class="a" style="left:633px;top:473.5px;overflow:visible" width="11" height="11" viewBox="0 0 11 11"><path d="M0.5 0.5V10.5H10.5M3 10V4M5 10V4M7 10V4M9 10V4" stroke="#8a9098" stroke-width="0.9" fill="none"/></svg>
<svg class="a" style="left:648.5px;top:473.5px;overflow:visible" width="11" height="11" viewBox="0 0 11 11"><path d="M5.5 1L10.5 10H0.5Z" stroke="#8a9098" stroke-width="0.9" fill="none"/></svg>
<svg class="a" style="left:662px;top:473.5px;overflow:visible" width="11" height="11" viewBox="0 0 11 11"><circle cx="3.5" cy="7.5" r="2.8" fill="none" stroke="#8a9098" stroke-width="0.9"/><path d="M4 4V1M5 5L10 1" stroke="#8a9098" stroke-width="0.9"/></svg>
<svg class="a" style="left:676.5px;top:473.5px;overflow:visible" width="12" height="11" viewBox="0 0 12 11"><path d="M1 4L8 1L11 3V6L4 10L1 8Z M1 4L4 6L11 3M4 6V10" stroke="#8a9098" stroke-width="0.8" fill="none"/></svg>
<div class="a" style="left:691.5px;top:470.5px;width:7.5px;height:16.5px;background:linear-gradient(180deg,#e4e8ef,#d4d9e2)"></div>
<svg class="a" style="left:692.5px;top:480.5px;overflow:visible" width="5" height="5" viewBox="0 0 5 5"><path d="M0.5 0.5H4.5" stroke="#222" stroke-width="0.8"/><path d="M0.5 2H4.5L2.5 4.5Z" fill="#222"/></svg>

</body></html>
